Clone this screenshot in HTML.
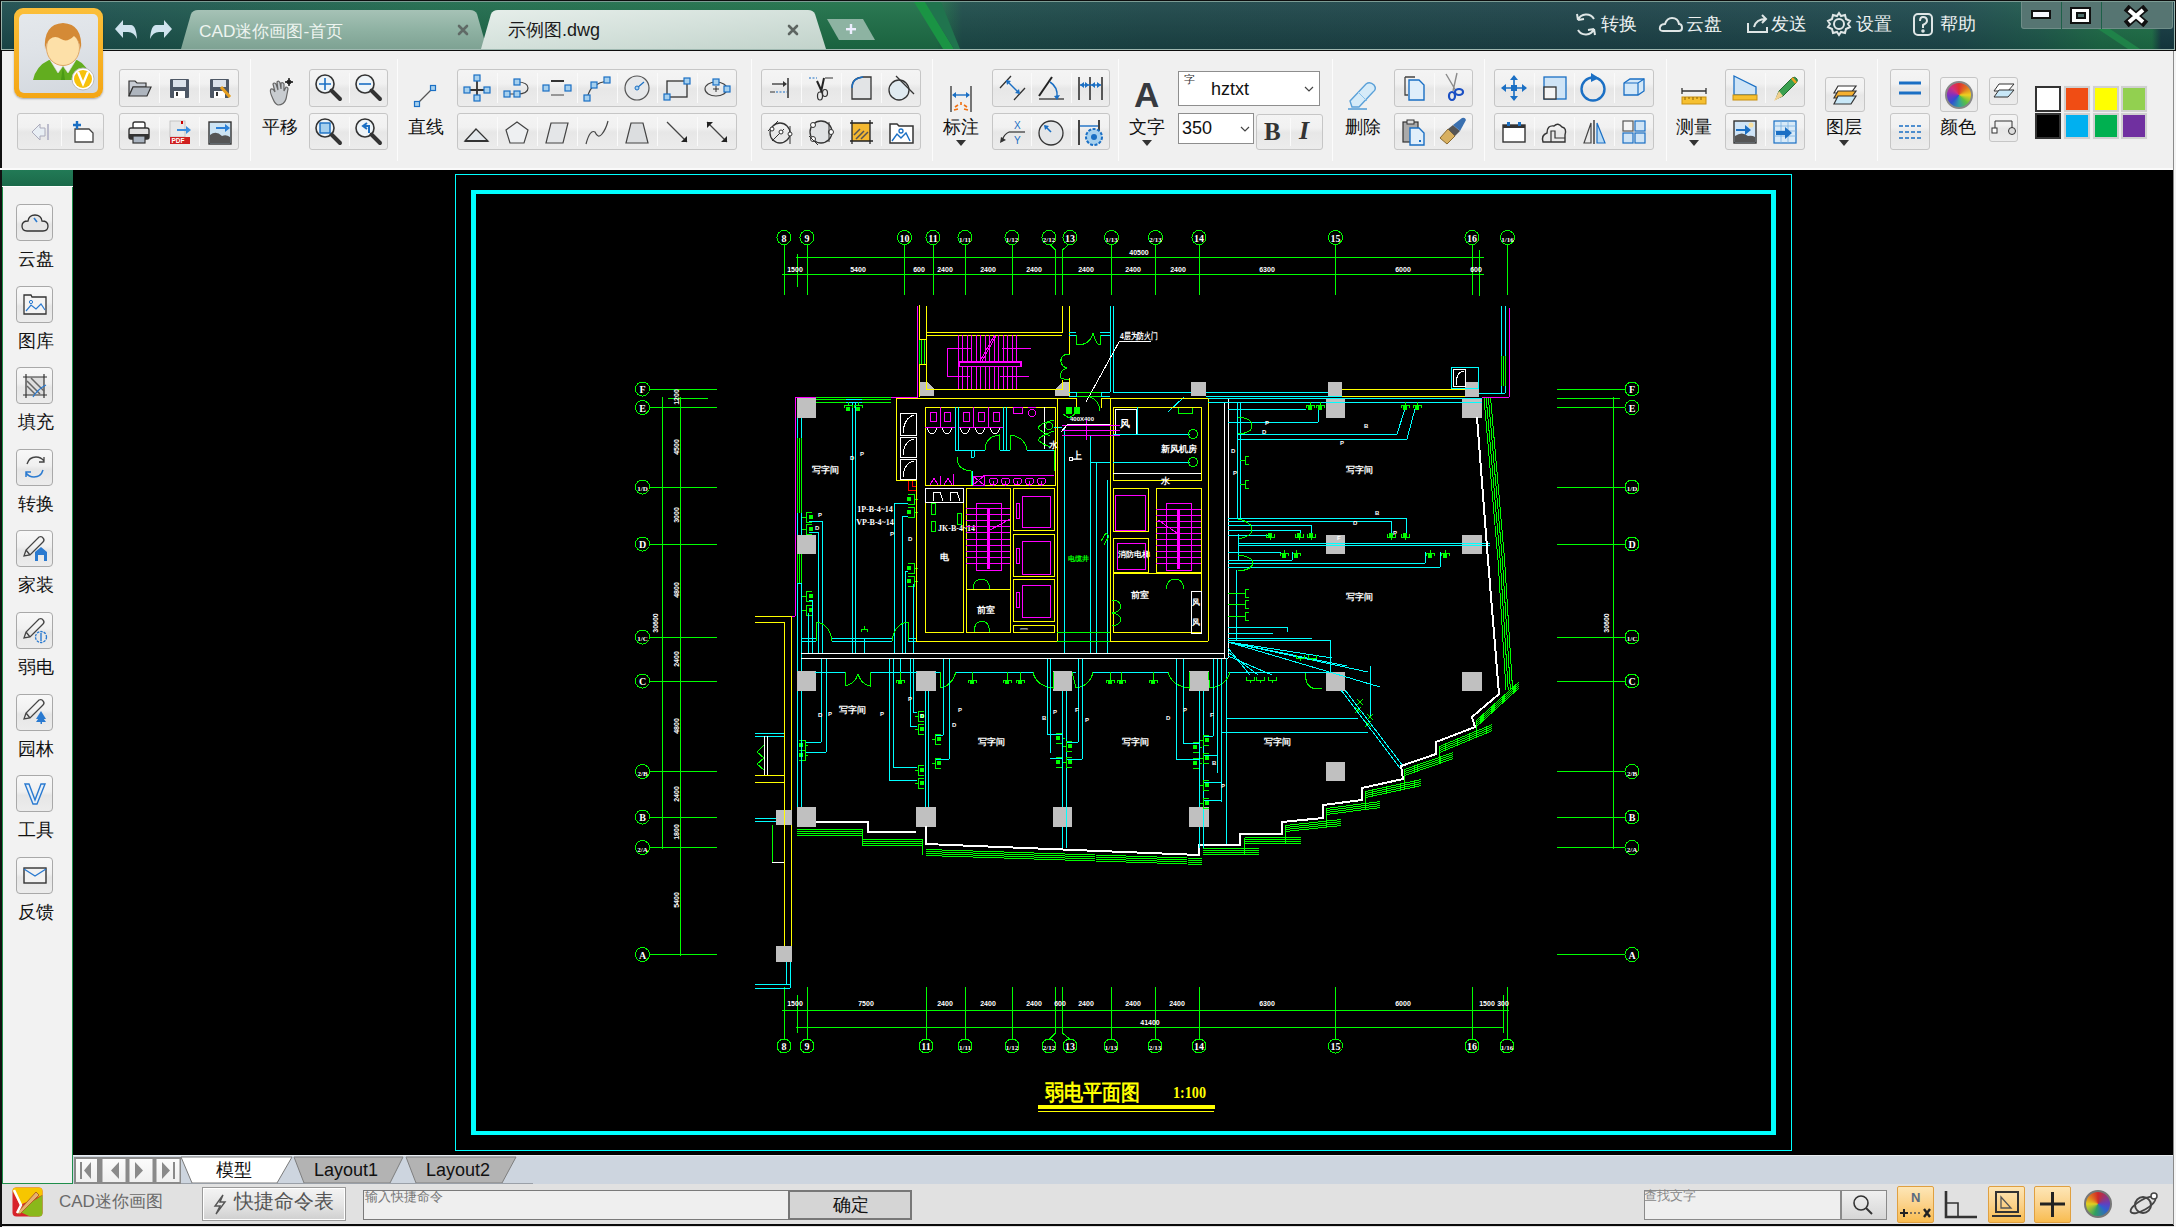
<!DOCTYPE html>
<html><head><meta charset="utf-8">
<style>
*{box-sizing:border-box;margin:0;padding:0}
html,body{width:2176px;height:1227px;overflow:hidden;background:#f0f0f0;font-family:"Liberation Sans",sans-serif;position:relative}
.a{position:absolute}
.t{position:absolute;white-space:nowrap;line-height:1}
#title{left:0;top:0;width:2176px;height:51px;background:#0d0d0d}
#titlein{left:1px;top:1px;width:2174px;height:49px;border:1px solid #9fb8b0;border-top-color:#7c9c94;
 background:linear-gradient(90deg,#1c4c4e 0px,#1d564e 170px,#1e6a4c 420px,#1e7048 830px,#1e7048 935px,#1d4c4a 960px,#1c4648 1150px,#1d4349 1600px,#1e4a4e 1950px,#1e5a4c 2040px,#1e6c48 2100px,#1e7048 2150px,#163c44 2159px)}
#toolbar{left:0;top:51px;width:2176px;height:118px;background:#f0f0f0;border-left:2px solid #111;border-right:2px solid #333}
#wline{left:0;top:168px;width:2176px;height:2px;background:#fafafa}
#sidebar{left:2px;top:170px;width:71px;height:1014px;background:#f2f2f2;border:1px solid #1e8e4a;border-top:none}
#sbhead{left:2px;top:170px;width:71px;height:17px;background:linear-gradient(#227a56,#1b6a4a);border-bottom:1px solid #fff}
#canvas{left:73px;top:170px;width:2103px;height:985px;background:#000;overflow:hidden}
#tabbar{left:73px;top:1155px;width:2103px;height:29px;background:#cdd5df;border-top:1px solid #e8ecf0}
#status{left:0;top:1184px;width:2176px;height:43px;background:#e1e1e1;border-left:2px solid #222}
#botline{left:0;top:1224px;width:2176px;height:2px;background:#0a0a0a}
#lborder{left:0;top:170px;width:2px;height:1057px;background:#111}
.grp{position:absolute;border:1px solid #c6c6c6;border-radius:3px;background:linear-gradient(180deg,#f4f4f4 0%,#f1f1f1 38%,#e7e7e7 52%,#ececec 100%)}
.dv{position:absolute;top:3px;bottom:3px;width:1px;background:#d2d2d2;border-right:1px solid #fafafa}
.sep{position:absolute;top:59px;width:1px;height:102px;background:#cfcfcf;border-right:1px solid #fcfcfc}
.lbl{position:absolute;white-space:nowrap;font-size:18px;line-height:20px;color:#111}
.ico{position:absolute;overflow:visible}
</style></head><body>
<div id="title" class="a"></div>
<div id="titlein" class="a"></div>
<div id="toolbar" class="a"></div>
<div id="wline" class="a"></div>
<div class="a" style="left:1px;top:2px;width:2173px;height:47px;background:linear-gradient(180deg,rgba(255,255,255,.06),rgba(0,0,0,.12))"></div>
<svg class="a" style="left:0;top:0" width="2176" height="51">
 <defs>
  <linearGradient id="tg1" x1="0" y1="0" x2="0" y2="1"><stop offset="0" stop-color="#a6c2b6"/><stop offset=".5" stop-color="#8fb2a3"/><stop offset="1" stop-color="#7ea293"/></linearGradient>
  <linearGradient id="tg2" x1="0" y1="0" x2="1" y2="1"><stop offset="0" stop-color="#e6eeea"/><stop offset=".5" stop-color="#d4e1db"/><stop offset="1" stop-color="#c2d3cb"/></linearGradient>
 </defs>
 <polygon points="914,2 925,2 954,49 943,49" fill="#1a9444"/>
 <polygon points="925,2 941,2 960,49 954,49" fill="#20744e"/>
 <polygon points="2098,29 2110,29 2140,49 2128,49" fill="#1f8a4a" opacity=".8"/>
 <path d="M181,49 L191,14 Q193,10 198,10 L470,10 Q475,10 477,14 L487,49 Z" fill="url(#tg1)"/>
 <path d="M481,49 L491,14 Q493,10 498,10 L808,10 Q813,10 815,14 L826,49 Z" fill="url(#tg2)"/>
 <polygon points="827,19 863,19 875,40 839,40" fill="#8db3a2"/>
 <rect x="846" y="28" width="10" height="2.4" fill="#eef"/>
 <rect x="849.8" y="24" width="2.4" height="10" fill="#eef"/>
 <g fill="#cfe3ee">
  <path d="M115,29 L123,20 L123,25 L131,25 Q136,25 137,39 Q134,32 128,32 L123,32 L123,38 Z"/>
  <path d="M172,29 L164,20 L164,25 L156,25 Q151,25 150,39 Q153,32 159,32 L164,32 L164,38 Z"/>
 </g>
 <g stroke="#606a66" stroke-width="2.6" stroke-linecap="round"><path d="M459,26 L467,34 M467,26 L459,34"/></g>
 <g stroke="#5d6561" stroke-width="2.6" stroke-linecap="round"><path d="M789,26 L797,34 M797,26 L789,34"/></g>
</svg>
<div class="a" style="left:199px;top:20px;font-size:17.3px;color:#eef4f0;white-space:nowrap;line-height:22px">CAD迷你画图-首页</div>
<div class="a" style="left:508px;top:19px;font-size:18px;color:#1a1a1a;white-space:nowrap;line-height:22px">示例图.dwg</div>
<!-- avatar -->
<div class="a" style="left:14px;top:8px;width:89px;height:90px;border-radius:9px;background:linear-gradient(#fbbf3a,#f4a614);box-shadow:0 1px 2px rgba(0,0,0,.3)"></div>
<div class="a" style="left:19px;top:14px;width:79px;height:79px;border-radius:5px;background:linear-gradient(170deg,#e4e8ec 0%,#dfe3e8 40%,#d3d8de 100%)"></div>
<svg class="a" style="left:14px;top:8px" width="90" height="92">
 <path d="M19,72 Q22,58 35,52 L63,52 Q74,57 77,72 Z" fill="#62ad1f"/>
 <path d="M36,52 L49,58 L44,65 Z M62,52 L49,58 L54,65 Z" fill="#f2f2f2" stroke="#d8d8d8" stroke-width=".6"/>
 <path d="M49,58 L47,72 L51,72 Z" fill="#4a9a14"/>
 <ellipse cx="49" cy="40" rx="16.5" ry="17.5" fill="#fde0a8" stroke="#e0a868" stroke-width="1"/>
 <path d="M31,42 Q29,16 49,15 Q69,16 67,42 Q65,31 60,28 Q53,35 47,31 Q41,27 36,31 Q32,34 31,42 Z" fill="#d48a36"/>
 <circle cx="69" cy="71" r="11" fill="#fff" stroke="#bbb" stroke-width="1"/>
 <circle cx="69" cy="71" r="9" fill="#f7c20c"/>
 <path d="M64,64 L69,76 L74,64" stroke="#fff" stroke-width="2.4" fill="none"/>
</svg>
<!-- right menu -->
<svg class="a" style="left:1570px;top:10px" width="420" height="30" fill="none" stroke="#dfe6e6" stroke-width="2">
 <path d="M24,9 A9,9 0 0 0 8,10 M8,10 L7,4 M8,10 L14,9 M8,20 A9,9 0 0 0 24,19 M24,19 L25,25 M24,19 L18,20" />
 <path d="M93,21 Q89,21 90,17 Q91,14 95,14 Q97,8 102,8 Q108,8 109,14 Q112,14 112,18 Q112,21 109,21 Z"/>
 <path d="M178,13 L178,22 L197,22 L197,17 M184,17 Q186,9 196,9 M192,5 L196,9 L192,13"/>
 <circle cx="269" cy="14" r="5"/><path d="M269,3 L271,6 L275,5 L276,9 L280,11 L278,14 L280,17 L276,19 L275,23 L271,22 L269,25 L267,22 L263,23 L262,19 L258,17 L260,14 L258,11 L262,9 L263,5 L267,6 Z"/>
 <rect x="344" y="4" width="18" height="21" rx="4"/><path d="M350,11 Q350,7 353,7 Q357,7 357,11 Q357,13 353,15 L353,18"/><circle cx="353" cy="21" r=".8" fill="#dfe6e6"/>
</svg>
<div class="a" style="left:1601px;top:13px;font-size:18px;color:#eef2f2;line-height:22px;white-space:nowrap">转换</div>
<div class="a" style="left:1686px;top:13px;font-size:18px;color:#eef2f2;line-height:22px;white-space:nowrap">云盘</div>
<div class="a" style="left:1771px;top:13px;font-size:18px;color:#eef2f2;line-height:22px;white-space:nowrap">发送</div>
<div class="a" style="left:1856px;top:13px;font-size:18px;color:#eef2f2;line-height:22px;white-space:nowrap">设置</div>
<div class="a" style="left:1940px;top:13px;font-size:18px;color:#eef2f2;line-height:22px;white-space:nowrap">帮助</div>
<!-- window buttons -->
<div class="a" style="left:2021px;top:2px;width:152px;height:27px;background:#567572;border:1px solid #6f8d88;border-top:none;border-radius:0 0 3px 3px"></div>
<div class="a" style="left:2061px;top:2px;width:1px;height:27px;background:#1d6048"></div>
<div class="a" style="left:2101px;top:2px;width:1px;height:27px;background:#1d6048"></div>
<div class="a" style="left:2031px;top:10px;width:20px;height:9px;background:#f8f8ff;border:2px solid #111"></div>
<div class="a" style="left:2070px;top:7px;width:21px;height:17px;background:#fff;border:2px solid #111"></div>
<div class="a" style="left:2076px;top:12px;width:10px;height:7px;background:#4f6e6a;border:2px solid #111"></div>
<svg class="a" style="left:2122px;top:5px" width="28" height="22"><path d="M7,5 L21,17 M21,5 L7,17" stroke="#111" stroke-width="7.5" stroke-linecap="square"/><path d="M7,5 L21,17 M21,5 L7,17" stroke="#fff" stroke-width="4"/></svg>


<div class="sep" style="left:250px"></div>
<div class="sep" style="left:397px"></div>
<div class="sep" style="left:751px"></div>
<div class="sep" style="left:932px"></div>
<div class="sep" style="left:1118px"></div>
<div class="sep" style="left:1332px"></div>
<div class="sep" style="left:1484px"></div>
<div class="sep" style="left:1666px"></div>
<div class="sep" style="left:1815px"></div>
<div class="sep" style="left:1877px"></div>
<div class="grp" style="left:17px;top:113px;width:87px;height:37px"><div class="dv" style="left:42.5px"></div></div>
<div class="grp" style="left:119px;top:69px;width:120px;height:38px"><div class="dv" style="left:39.0px"></div><div class="dv" style="left:79.0px"></div></div>
<div class="grp" style="left:119px;top:113px;width:120px;height:37px"><div class="dv" style="left:39.0px"></div><div class="dv" style="left:79.0px"></div></div>
<div class="grp" style="left:309px;top:69px;width:79px;height:38px"><div class="dv" style="left:38.5px"></div></div>
<div class="grp" style="left:309px;top:113px;width:79px;height:37px"><div class="dv" style="left:38.5px"></div></div>
<div class="grp" style="left:457px;top:69px;width:280px;height:38px"><div class="dv" style="left:39.0px"></div><div class="dv" style="left:79.0px"></div><div class="dv" style="left:119.0px"></div><div class="dv" style="left:159.0px"></div><div class="dv" style="left:199.0px"></div><div class="dv" style="left:239.0px"></div></div>
<div class="grp" style="left:457px;top:113px;width:280px;height:37px"><div class="dv" style="left:39.0px"></div><div class="dv" style="left:79.0px"></div><div class="dv" style="left:119.0px"></div><div class="dv" style="left:159.0px"></div><div class="dv" style="left:199.0px"></div><div class="dv" style="left:239.0px"></div></div>
<div class="grp" style="left:761px;top:69px;width:160px;height:38px"><div class="dv" style="left:39.0px"></div><div class="dv" style="left:79.0px"></div><div class="dv" style="left:119.0px"></div></div>
<div class="grp" style="left:761px;top:113px;width:160px;height:37px"><div class="dv" style="left:39.0px"></div><div class="dv" style="left:79.0px"></div><div class="dv" style="left:119.0px"></div></div>
<div class="grp" style="left:992px;top:69px;width:118px;height:38px"><div class="dv" style="left:38.3px"></div><div class="dv" style="left:77.7px"></div></div>
<div class="grp" style="left:992px;top:113px;width:118px;height:37px"><div class="dv" style="left:38.3px"></div><div class="dv" style="left:77.7px"></div></div>
<div class="grp" style="left:1256px;top:114px;width:67px;height:36px"><div class="dv" style="left:32.5px"></div></div>
<div class="grp" style="left:1394px;top:69px;width:79px;height:38px"><div class="dv" style="left:38.5px"></div></div>
<div class="grp" style="left:1394px;top:113px;width:79px;height:37px"><div class="dv" style="left:38.5px"></div></div>
<div class="grp" style="left:1494px;top:69px;width:160px;height:38px"><div class="dv" style="left:39.0px"></div><div class="dv" style="left:79.0px"></div><div class="dv" style="left:119.0px"></div></div>
<div class="grp" style="left:1494px;top:113px;width:160px;height:37px"><div class="dv" style="left:39.0px"></div><div class="dv" style="left:79.0px"></div><div class="dv" style="left:119.0px"></div></div>
<div class="grp" style="left:1725px;top:69px;width:80px;height:38px"><div class="dv" style="left:39.0px"></div></div>
<div class="grp" style="left:1725px;top:113px;width:80px;height:37px"><div class="dv" style="left:39.0px"></div></div>
<div class="grp" style="left:1825px;top:77px;width:40px;height:35px"></div>
<div class="grp" style="left:1890px;top:69px;width:40px;height:38px"></div>
<div class="grp" style="left:1890px;top:113px;width:40px;height:37px"></div>
<div class="grp" style="left:1940px;top:77px;width:38px;height:35px"></div>
<div class="grp" style="left:1989px;top:77px;width:29px;height:28px"></div>
<div class="grp" style="left:1989px;top:114px;width:29px;height:28px"></div>
<div class="lbl" style="left:262px;top:117px;width:36px;text-align:center">平移</div>
<div class="lbl" style="left:408px;top:117px;width:36px;text-align:center">直线</div>
<div class="lbl" style="left:943px;top:117px;width:36px;text-align:center">标注</div>
<div class="lbl" style="left:1129px;top:117px;width:36px;text-align:center">文字</div>
<div class="lbl" style="left:1345px;top:117px;width:36px;text-align:center">删除</div>
<div class="lbl" style="left:1676px;top:117px;width:36px;text-align:center">测量</div>
<div class="lbl" style="left:1826px;top:117px;width:36px;text-align:center">图层</div>
<div class="lbl" style="left:1940px;top:117px;width:36px;text-align:center">颜色</div>
<svg class="ico" style="left:956px;top:140px" width="10" height="6"><path d="M0,0 L10,0 L5,6Z" fill="#333"/></svg>
<svg class="ico" style="left:1142px;top:140px" width="10" height="6"><path d="M0,0 L10,0 L5,6Z" fill="#333"/></svg>
<svg class="ico" style="left:1689px;top:140px" width="10" height="6"><path d="M0,0 L10,0 L5,6Z" fill="#333"/></svg>
<svg class="ico" style="left:1839px;top:140px" width="10" height="6"><path d="M0,0 L10,0 L5,6Z" fill="#333"/></svg>
<svg class="ico" style="left:24.0px;top:116.5px" width="30" height="30" viewBox="0 0 30 30"><path d="M8,15 L16,7 L16,11 L21,11 L21,19 L16,19 L16,23Z" fill="#e8eef4" stroke="#aab" stroke-width="1"/><rect x="23" y="7" width="2" height="16" fill="#bbc"/></svg>
<svg class="ico" style="left:67.0px;top:116.5px" width="30" height="30" viewBox="0 0 30 30"><path d="M8,12 L22,12 L26,16 L26,25 L8,25Z" fill="#fff" stroke="#444" stroke-width="1.3"/><path d="M10,4 L10,12 M6,8 L14,8" stroke="#1a6fc4" stroke-width="2.4"/></svg>
<svg class="ico" style="left:124.0px;top:73.0px" width="30" height="30" viewBox="0 0 30 30"><path d="M5,8 L11,8 L13,10 L22,10 L22,14 L9,14 L5,23Z" fill="#c7ccd4" stroke="#333" stroke-width="1.2"/><path d="M5,23 L9,14 L27,14 L23,23Z" fill="#aeb5be" stroke="#333" stroke-width="1.2"/></svg>
<svg class="ico" style="left:164.0px;top:73.0px" width="30" height="30" viewBox="0 0 30 30"><rect x="6" y="6" width="19" height="19" rx="1" fill="#4e5866"/><rect x="9" y="7" width="13" height="7" fill="#dde3ea"/><rect x="10" y="18" width="11" height="7" fill="#fff"/><rect x="12" y="19" width="2" height="4" fill="#333"/></svg>
<svg class="ico" style="left:204.0px;top:73.0px" width="30" height="30" viewBox="0 0 30 30"><rect x="6" y="6" width="19" height="19" rx="1" fill="#4e5866"/><rect x="9" y="7" width="13" height="7" fill="#dde3ea"/><rect x="10" y="18" width="11" height="7" fill="#fff"/><rect x="12" y="19" width="2" height="4" fill="#333"/><path d="M17,14 L26,24" stroke="#e8a020" stroke-width="3"/></svg>
<svg class="ico" style="left:124.0px;top:116.5px" width="30" height="30" viewBox="0 0 30 30"><rect x="9" y="5" width="12" height="7" rx="2" fill="#fff" stroke="#333" stroke-width="1.4"/><rect x="5" y="11" width="20" height="11" rx="2" fill="#e0e0e0" stroke="#333" stroke-width="1.4"/><rect x="5" y="17" width="20" height="5" fill="#333"/><rect x="9" y="19" width="12" height="7" fill="#aab4c0" stroke="#333" stroke-width="1.2"/></svg>
<svg class="ico" style="left:164.0px;top:116.5px" width="30" height="30" viewBox="0 0 30 30"><rect x="6" y="4" width="15" height="16" fill="#e8e8e8" stroke="#bbb" stroke-width=".8"/><rect x="6" y="20" width="20" height="7" fill="#d02020"/><text x="7.5" y="26" font-size="6.5" fill="#fff" font-weight="bold" font-family="Liberation Sans">PDF</text><path d="M13,12 L22,12 L22,9 L27,13 L22,17 L22,14 L13,14Z" fill="#3a8ee0"/><rect x="17" y="4" width="2" height="3" fill="#c00"/></svg>
<svg class="ico" style="left:204.0px;top:116.5px" width="30" height="30" viewBox="0 0 30 30"><rect x="5" y="5" width="22" height="22" fill="#cde4f4" stroke="#333" stroke-width="1.4"/><path d="M6,26 L6,18 Q12,13 18,19 Q22,17 26,20 L26,26Z" fill="#555"/><path d="M12,10 L21,10 L21,7 L26,11 L21,15 L21,12 L12,12Z" fill="#2a80d8"/></svg>
<svg class="ico" style="left:264.0px;top:77.0px" width="32" height="32" viewBox="0 0 32 32"><path d="M9,22 Q5,14 7,12 Q9,11 11,15 L9,7 Q10,5 12,7 L14,13 L13,5 Q15,3 16,6 L17,12 L17,6 Q19,5 20,7 L20,14 L22,10 Q24,10 24,12 L22,22 Q20,28 14,28 Q11,27 9,22Z" fill="#c8ccd0" stroke="#666" stroke-width="1.2"/><path d="M25,1 L25,9 M21,5 L29,5" stroke="#111" stroke-width="1.4"/><circle cx="25" cy="5" r="2" fill="none" stroke="#111"/></svg>
<svg class="ico" style="left:313.0px;top:72.0px" width="32" height="32" viewBox="0 0 32 32"><circle cx="12" cy="12" r="9" fill="#eef4f8" stroke="#333" stroke-width="1.6"/><path d="M18.5,18.5 L27,27" stroke="#333" stroke-width="4" stroke-linecap="round"/><path d="M12,6 L12,18 M6,12 L18,12" stroke="#1a6fc4" stroke-width="1.6"/></svg>
<svg class="ico" style="left:353.0px;top:72.0px" width="32" height="32" viewBox="0 0 32 32"><circle cx="12" cy="12" r="9" fill="#eef4f8" stroke="#333" stroke-width="1.6"/><path d="M18.5,18.5 L27,27" stroke="#333" stroke-width="4" stroke-linecap="round"/><path d="M6,12 L18,12" stroke="#1a6fc4" stroke-width="1.6"/></svg>
<svg class="ico" style="left:313.0px;top:115.5px" width="32" height="32" viewBox="0 0 32 32"><circle cx="12" cy="12" r="9" fill="#eef4f8" stroke="#333" stroke-width="1.6"/><path d="M18.5,18.5 L27,27" stroke="#333" stroke-width="4" stroke-linecap="round"/><rect x="7" y="7" width="10" height="10" fill="#a6d0ee" stroke="#1a6fc4" stroke-width="1.4"/></svg>
<svg class="ico" style="left:353.0px;top:115.5px" width="32" height="32" viewBox="0 0 32 32"><circle cx="12" cy="12" r="9" fill="#eef4f8" stroke="#333" stroke-width="1.6"/><path d="M18.5,18.5 L27,27" stroke="#333" stroke-width="4" stroke-linecap="round"/><path d="M16,17 L16,10 L11,10 M14,7 L10,10 L14,13" stroke="#1a6fc4" stroke-width="2" fill="none"/></svg>
<svg class="ico" style="left:411.0px;top:80.0px" width="30" height="30" viewBox="0 0 30 30"><path d="M7,23 L21,9" stroke="#555" stroke-width="1.3"/><rect x="3.5" y="21.5" width="5" height="5" fill="#a6d0ee" stroke="#1a6fc4" stroke-width="1.2"/><rect x="19.5" y="5.5" width="5" height="5" fill="#a6d0ee" stroke="#1a6fc4" stroke-width="1.2"/></svg>
<svg class="ico" style="left:462.0px;top:73.0px" width="30" height="30" viewBox="0 0 30 30"><path d="M15,4 L15,26 M5,17 L25,17" stroke="#333" stroke-width="1.8"/><rect x="12.0" y="2.0" width="6" height="6" fill="#a6d0ee" stroke="#1a6fc4" stroke-width="1.2"/><rect x="12.0" y="22.0" width="6" height="6" fill="#a6d0ee" stroke="#1a6fc4" stroke-width="1.2"/><rect x="2.0" y="14.0" width="6" height="6" fill="#a6d0ee" stroke="#1a6fc4" stroke-width="1.2"/><rect x="22.0" y="14.0" width="6" height="6" fill="#a6d0ee" stroke="#1a6fc4" stroke-width="1.2"/></svg>
<svg class="ico" style="left:502.0px;top:73.0px" width="30" height="30" viewBox="0 0 30 30"><path d="M5,21 L15,21 M15,9 Q26,9 26,15 Q26,21 15,21" stroke="#444" stroke-width="1.2" fill="none"/><rect x="2.0" y="18.0" width="6" height="6" fill="#a6d0ee" stroke="#1a6fc4" stroke-width="1.2"/><rect x="12.0" y="18.0" width="6" height="6" fill="#a6d0ee" stroke="#1a6fc4" stroke-width="1.2"/><rect x="12.0" y="6.0" width="6" height="6" fill="#a6d0ee" stroke="#1a6fc4" stroke-width="1.2"/></svg>
<svg class="ico" style="left:542.0px;top:73.0px" width="30" height="30" viewBox="0 0 30 30"><path d="M9,8 L22,8" stroke="#333" stroke-width="2"/><path d="M9,22 L22,22" stroke="#444" stroke-width="1"/><rect x="1.0" y="12.0" width="6" height="6" fill="#a6d0ee" stroke="#1a6fc4" stroke-width="1.2"/><rect x="23.0" y="12.0" width="6" height="6" fill="#a6d0ee" stroke="#1a6fc4" stroke-width="1.2"/></svg>
<svg class="ico" style="left:582.0px;top:73.0px" width="30" height="30" viewBox="0 0 30 30"><path d="M5,25 Q8,15 12,13 Q18,9 25,8" stroke="#444" stroke-width="1.2" fill="none"/><rect x="2.0" y="22.0" width="6" height="6" fill="#a6d0ee" stroke="#1a6fc4" stroke-width="1.2"/><rect x="9.0" y="9.0" width="6" height="6" fill="#a6d0ee" stroke="#1a6fc4" stroke-width="1.2"/><rect x="22.0" y="4.0" width="6" height="6" fill="#a6d0ee" stroke="#1a6fc4" stroke-width="1.2"/></svg>
<svg class="ico" style="left:622.0px;top:73.0px" width="30" height="30" viewBox="0 0 30 30"><circle cx="15" cy="15" r="12" fill="#e6e8ea" stroke="#555" stroke-width="1.2"/><path d="M15,15 L22,9" stroke="#1a6fc4" stroke-width="1.2"/><circle cx="15" cy="15" r="2" fill="#a6d0ee" stroke="#1a6fc4"/></svg>
<svg class="ico" style="left:662.0px;top:73.0px" width="30" height="30" viewBox="0 0 30 30"><rect x="5" y="8" width="20" height="16" fill="#e8eaec" stroke="#333" stroke-width="1.3"/><rect x="2.0" y="21.0" width="6" height="6" fill="#a6d0ee" stroke="#1a6fc4" stroke-width="1.2"/><rect x="22.0" y="5.0" width="6" height="6" fill="#a6d0ee" stroke="#1a6fc4" stroke-width="1.2"/></svg>
<svg class="ico" style="left:702.0px;top:73.0px" width="30" height="30" viewBox="0 0 30 30"><ellipse cx="14" cy="16" rx="11" ry="7" fill="none" stroke="#444" stroke-width="1.2"/><path d="M14,13 L14,19 M11,16 L17,16" stroke="#333"/><rect x="11.0" y="6.0" width="6" height="6" fill="#a6d0ee" stroke="#1a6fc4" stroke-width="1.2"/><rect x="22.0" y="13.0" width="6" height="6" fill="#a6d0ee" stroke="#1a6fc4" stroke-width="1.2"/></svg>
<svg class="ico" style="left:462.0px;top:116.5px" width="30" height="30" viewBox="0 0 30 30"><path d="M3,24 L14,12 L26,24Z" fill="#e4e8ec" stroke="#333" stroke-width="1.3"/><path d="M3,24 L26,24" stroke="#333" stroke-width="2"/></svg>
<svg class="ico" style="left:502.0px;top:116.5px" width="30" height="30" viewBox="0 0 30 30"><path d="M15,5 L26,13 L22,26 L8,26 L4,13Z" fill="#eef0f2" stroke="#444" stroke-width="1.2"/></svg>
<svg class="ico" style="left:542.0px;top:116.5px" width="30" height="30" viewBox="0 0 30 30"><path d="M9,6 L26,6 L21,26 L4,26Z" fill="#e4e6e8" stroke="#444" stroke-width="1.2"/></svg>
<svg class="ico" style="left:582.0px;top:116.5px" width="30" height="30" viewBox="0 0 30 30"><path d="M4,27 Q8,12 13,15 Q16,22 20,17 Q24,12 26,4" stroke="#444" stroke-width="1.2" fill="none"/></svg>
<svg class="ico" style="left:622.0px;top:116.5px" width="30" height="30" viewBox="0 0 30 30"><path d="M9,6 L21,6 L26,26 L4,26Z" fill="#dcdee0" stroke="#444" stroke-width="1.2"/></svg>
<svg class="ico" style="left:662.0px;top:116.5px" width="30" height="30" viewBox="0 0 30 30"><path d="M5,5 L25,25" stroke="#444" stroke-width="1.3"/><path d="M25,25 L25,19 L19,25Z" fill="#222"/></svg>
<svg class="ico" style="left:702.0px;top:116.5px" width="30" height="30" viewBox="0 0 30 30"><path d="M5,5 L25,25" stroke="#444" stroke-width="1.3"/><path d="M25,25 L25,19 L19,25Z M5,5 L5,11 L11,5Z" fill="#222"/></svg>
<svg class="ico" style="left:766.0px;top:73.0px" width="30" height="30" viewBox="0 0 30 30"><path d="M22,5 L22,25" stroke="#333" stroke-width="1.5"/><path d="M6,11 L17,11" stroke="#333" stroke-width="1.3"/><path d="M17,8 L21,11 L17,14Z" fill="#333"/><path d="M4,19 L9,19" stroke="#333"/><path d="M10,19 L21,19" stroke="#1a6fc4" stroke-dasharray="2,1.5"/></svg>
<svg class="ico" style="left:806.0px;top:73.0px" width="30" height="30" viewBox="0 0 30 30"><path d="M3,5 L11,5" stroke="#1a6fc4" stroke-dasharray="2,1.5"/><path d="M19,5 L27,5" stroke="#333"/><path d="M11,8 L16,19 M18,5 L15,19" stroke="#222" stroke-width="2"/><ellipse cx="14" cy="23" rx="2.5" ry="4" fill="none" stroke="#333" stroke-width="1.2"/><ellipse cx="19" cy="20" rx="2.5" ry="3.5" fill="none" stroke="#333" stroke-width="1.2"/></svg>
<svg class="ico" style="left:846.0px;top:73.0px" width="30" height="30" viewBox="0 0 30 30"><path d="M6,26 L6,14 Q6,5 17,4 L25,4 L25,26Z" fill="#e2e4e6" stroke="#333" stroke-width="1.3"/><path d="M6,15 Q6,5 17,4" stroke="#1a6fc4" stroke-width="1.4" fill="none"/></svg>
<svg class="ico" style="left:886.0px;top:73.0px" width="30" height="30" viewBox="0 0 30 30"><circle cx="13" cy="17" r="10" fill="#e0eaf0" stroke="#333" stroke-width="1.3"/><path d="M10,3 L28,21" stroke="#333" stroke-width="1.3"/></svg>
<svg class="ico" style="left:766.0px;top:116.5px" width="30" height="30" viewBox="0 0 30 30"><circle cx="14" cy="16" r="10" fill="none" stroke="#333" stroke-width="1.3"/><path d="M2,14 L12,4 M24,9 L24,27 M6,24 L18,12" stroke="#333"/><circle cx="6" cy="12" r="2" fill="#fff" stroke="#333"/><circle cx="24" cy="17" r="2" fill="#fff" stroke="#333"/><circle cx="15" cy="15" r="2" fill="#fff" stroke="#333"/></svg>
<svg class="ico" style="left:806.0px;top:116.5px" width="30" height="30" viewBox="0 0 30 30"><circle cx="15" cy="15" r="11" fill="#e0e2e4" stroke="#333" stroke-width="1.3"/><circle cx="7" cy="8" r="2.5" fill="#fff" stroke="#333"/><circle cx="7" cy="22" r="2.5" fill="#fff" stroke="#333"/><circle cx="25" cy="15" r="2.5" fill="#fff" stroke="#333"/><path d="M23,5 L23,25 M3,19 L12,28" stroke="#333"/></svg>
<svg class="ico" style="left:846.0px;top:116.5px" width="30" height="30" viewBox="0 0 30 30"><rect x="6" y="6" width="18" height="18" fill="#f4b830"/><path d="M4,6 L27,6 M4,24 L27,24 M6,3 L6,27 M24,3 L24,27" stroke="#222" stroke-width="1.3"/><path d="M8,18 L14,12 M10,22 L18,14 M15,22 L22,15" stroke="#555" stroke-width="1.5"/></svg>
<svg class="ico" style="left:886.0px;top:116.5px" width="30" height="30" viewBox="0 0 30 30"><path d="M4,7 L11,7 L13,9 L27,9 L27,26 L4,26Z" fill="#fff" stroke="#333" stroke-width="1.5"/><circle cx="15" cy="14" r="2" fill="none" stroke="#1a6fc4" stroke-width="1.3"/><path d="M6,24 L11,17 L15,21 L20,16 L24,24" fill="none" stroke="#1a6fc4" stroke-width="1.4"/></svg>
<svg class="ico" style="left:946.0px;top:84.0px" width="30" height="30" viewBox="0 0 30 30"><path d="M5,2 L5,28 M25,2 L25,28" stroke="#333" stroke-width="1.3"/><path d="M7,11 L23,11" stroke="#1a6fc4" stroke-width="1.4"/><path d="M6,11 L10,8 L10,14Z M24,11 L20,8 L20,14Z" fill="#1a6fc4"/><path d="M15,18 L15,21 M9,23 L12,21 M21,23 L18,21 M8,26 L12,25 M22,26 L18,25" stroke="#f07010" stroke-width="1.6"/></svg>
<svg class="ico" style="left:996.7px;top:73.0px" width="30" height="30" viewBox="0 0 30 30"><path d="M3,15 L14,3 M17,27 L28,15" stroke="#333" stroke-width="1.3"/><path d="M10,8 L22,20" stroke="#1a6fc4" stroke-width="1.5"/><path d="M9,7 L14,8 L10,12Z M23,21 L18,20 L22,16Z" fill="#1a6fc4"/></svg>
<svg class="ico" style="left:1036.0px;top:73.0px" width="30" height="30" viewBox="0 0 30 30"><path d="M3,23 L16,4" stroke="#222" stroke-width="2"/><path d="M3,26 L28,26" stroke="#333" stroke-width="1.3"/><path d="M14,9 Q22,14 21,24" stroke="#1a6fc4" stroke-width="1.5" fill="none"/><path d="M18,23 L21,27 L24,22Z" fill="#1a6fc4"/></svg>
<svg class="ico" style="left:1075.3px;top:73.0px" width="30" height="30" viewBox="0 0 30 30"><path d="M4,4 L4,27 M15,4 L15,27 M27,4 L27,27" stroke="#333" stroke-width="1.6"/><path d="M5,12 L26,12" stroke="#1a6fc4" stroke-width="1.4"/><path d="M5,12 L9,9 L9,15Z M14,12 L10,9 L10,15Z M16,12 L20,9 L20,15Z M26,12 L22,9 L22,15Z" fill="#1a6fc4"/></svg>
<svg class="ico" style="left:996.7px;top:116.5px" width="30" height="30" viewBox="0 0 30 30"><text x="17" y="12" font-size="10" fill="#1a6fc4" font-family="Liberation Sans">X</text><text x="17" y="27" font-size="10" fill="#1a6fc4" font-family="Liberation Sans">Y</text><path d="M12,15 L28,15" stroke="#333" stroke-width="1.2"/><path d="M12,15 Q7,17 5,24" stroke="#333" fill="none" stroke-width="1.3"/><path d="M3,26 L4,20 L9,23Z" fill="#333"/></svg>
<svg class="ico" style="left:1036.0px;top:116.5px" width="30" height="30" viewBox="0 0 30 30"><circle cx="15" cy="16" r="12" fill="#e4e6e8" stroke="#333" stroke-width="1.3"/><path d="M9,9 L15,15" stroke="#1a6fc4" stroke-width="1.6"/><path d="M8,8 L13,9 L9,13Z" fill="#1a6fc4"/></svg>
<svg class="ico" style="left:1075.3px;top:116.5px" width="30" height="30" viewBox="0 0 30 30"><path d="M4,3 L4,28 M24,3 L24,14" stroke="#444" stroke-width="2"/><path d="M5,9 L23,9" stroke="#1a6fc4" stroke-width="1.4"/><circle cx="19" cy="20" r="8" fill="#a6d0ee" stroke="#1a6fc4" stroke-width="2" stroke-dasharray="3,1.5"/><circle cx="19" cy="20" r="3" fill="#1a6fc4"/></svg>
<div class="t" style="left:1134px;top:77px;font-size:35px;font-weight:bold;color:#373a40;font-family:'Liberation Sans',sans-serif">A</div>
<div class="a" style="left:1178px;top:71px;width:142px;height:35px;background:#fff;border:1px solid #8e8e8e"></div>
<div class="t" style="left:1211px;top:80px;font-size:18px;color:#111">hztxt</div>
<div class="t" style="left:1184px;top:74px;font-size:11px;color:#333">字</div>
<svg class="ico" style="left:1304px;top:86px" width="10" height="6"><path d="M1,1 L5,5 L9,1" stroke="#444" fill="none" stroke-width="1.2"/></svg>
<div class="a" style="left:1178px;top:113px;width:76px;height:31px;background:#fff;border:1px solid #8e8e8e"></div>
<div class="t" style="left:1182px;top:119px;font-size:18px;color:#111">350</div>
<svg class="ico" style="left:1240px;top:126px" width="10" height="6"><path d="M1,1 L5,5 L9,1" stroke="#444" fill="none" stroke-width="1.2"/></svg>
<div class="t" style="left:1264px;top:119px;font-size:25px;font-weight:bold;color:#333;font-family:'Liberation Serif',serif">B</div>
<div class="t" style="left:1299px;top:118px;font-size:26px;font-weight:bold;font-style:italic;color:#333;font-family:'Liberation Serif',serif">I</div>
<svg class="ico" style="left:1347.0px;top:79.0px" width="32" height="32" viewBox="0 0 32 32"><path d="M3,22 L19,5 Q23,2 27,6 Q30,10 26,13 L12,28 L5,28Z" fill="#d6ebf8" stroke="#5aa0d8" stroke-width="1.4"/><path d="M11,13 L20,22" stroke="#8cc4ec" stroke-width="1"/><path d="M1,30 L20,30" stroke="#5aa0d8" stroke-width="1.6"/></svg>
<svg class="ico" style="left:1399.0px;top:73.0px" width="30" height="30" viewBox="0 0 30 30"><path d="M6,4 L16,4 M6,4 L6,22 L9,22" stroke="#444" stroke-width="1.3" fill="none"/><path d="M10,7 L20,7 L25,12 L25,27 L10,27Z" fill="#e0eefa" stroke="#1a6fc4" stroke-width="1.4"/></svg>
<svg class="ico" style="left:1437.5px;top:72.0px" width="32" height="32" viewBox="0 0 32 32"><path d="M8,2 L18,19 M19,1 L15,19" stroke="#8a8a8a" stroke-width="1.4"/><ellipse cx="14" cy="24" rx="3" ry="4" fill="none" stroke="#1a4fc4" stroke-width="2.2"/><ellipse cx="21" cy="20" rx="4" ry="3" fill="none" stroke="#1a4fc4" stroke-width="2.2"/></svg>
<svg class="ico" style="left:1399.0px;top:116.5px" width="30" height="30" viewBox="0 0 30 30"><rect x="4" y="5" width="15" height="20" fill="#aaa" stroke="#333" stroke-width="1.2"/><rect x="8" y="3" width="7" height="4" fill="#ddd" stroke="#333"/><path d="M11,11 L20,11 L25,16 L25,28 L11,28Z" fill="#e0eefa" stroke="#1a6fc4" stroke-width="1.4"/><rect x="20" y="23" width="2" height="2" fill="#1a6fc4"/></svg>
<svg class="ico" style="left:1437.5px;top:115.5px" width="32" height="32" viewBox="0 0 32 32"><path d="M2,22 L10,13 L17,20 L9,28 Z" fill="#d8b060" stroke="#8a6a30" stroke-width="1"/><path d="M10,13 L15,9 L22,15 L17,20 Z" fill="#555"/><path d="M15,9 L24,2 Q27,1 28,4 L22,15 Z" fill="#3a70b0"/></svg>
<svg class="ico" style="left:1499.0px;top:73.0px" width="30" height="30" viewBox="0 0 30 30"><path d="M15,3 L15,27 M3,15 L27,15" stroke="#1a6fc4" stroke-width="1.6"/><path d="M15,2 L11,7 L19,7Z M15,28 L11,23 L19,23Z M2,15 L7,11 L7,19Z M28,15 L23,11 L23,19Z" fill="#1a6fc4"/><rect x="12" y="12" width="6" height="6" fill="#1a6fc4"/></svg>
<svg class="ico" style="left:1539.0px;top:73.0px" width="30" height="30" viewBox="0 0 30 30"><rect x="5" y="4" width="22" height="22" fill="#cfe4f6" stroke="#1a6fc4" stroke-width="1.3"/><rect x="5" y="14" width="12" height="12" fill="#f4f4f4" stroke="#333" stroke-width="1.3"/></svg>
<svg class="ico" style="left:1578.0px;top:72.0px" width="32" height="32" viewBox="0 0 32 32"><circle cx="15" cy="17" r="11.5" fill="none" stroke="#1a6fc4" stroke-width="2.4"/><path d="M13,1 L21,6 L13,10Z" fill="#1a6fc4"/></svg>
<svg class="ico" style="left:1619.0px;top:73.0px" width="30" height="30" viewBox="0 0 30 30"><path d="M5,10 L11,6 L25,6 L25,18 L19,22 L5,22Z" fill="#d4e8f8" stroke="#1a6fc4" stroke-width="1.3"/><path d="M5,10 L19,10 L25,6 M19,10 L19,22" stroke="#1a6fc4" stroke-width="1.2" fill="none"/></svg>
<svg class="ico" style="left:1499.0px;top:116.5px" width="30" height="30" viewBox="0 0 30 30"><rect x="4" y="8" width="22" height="17" fill="#fff" stroke="#333" stroke-width="1.4"/><rect x="4" y="8" width="22" height="3" fill="#333"/><rect x="8" y="5" width="3" height="4" fill="#1a6fc4"/><rect x="19" y="5" width="3" height="4" fill="#1a6fc4"/></svg>
<svg class="ico" style="left:1539.0px;top:116.5px" width="30" height="30" viewBox="0 0 30 30"><path d="M4,25 Q2,18 8,16 Q8,8 15,9 Q19,5 23,10 Q28,11 26,18 L26,25Z" fill="none" stroke="#333" stroke-width="1.4"/><path d="M12,25 L12,14 L16,14 L16,21 L26,21" stroke="#333" stroke-width="1.2" fill="none"/></svg>
<svg class="ico" style="left:1579.0px;top:116.5px" width="30" height="30" viewBox="0 0 30 30"><path d="M15,3 L15,27" stroke="#333" stroke-width="1.4"/><path d="M12,6 L5,26 L12,26Z" fill="none" stroke="#444" stroke-width="1.2"/><path d="M18,6 L26,26 L18,26Z" fill="#b8daf4" stroke="#1a6fc4" stroke-width="1.2"/></svg>
<svg class="ico" style="left:1619.0px;top:116.5px" width="30" height="30" viewBox="0 0 30 30"><rect x="4" y="4" width="10" height="10" fill="#f4f4f4" stroke="#555" stroke-width="1.2"/><rect x="16" y="4" width="10" height="10" fill="#cfe4f6" stroke="#1a6fc4" stroke-width="1.2"/><rect x="4" y="16" width="10" height="10" fill="#cfe4f6" stroke="#1a6fc4" stroke-width="1.2"/><rect x="16" y="16" width="10" height="10" fill="#cfe4f6" stroke="#1a6fc4" stroke-width="1.2"/></svg>
<svg class="ico" style="left:1679.0px;top:81.0px" width="30" height="30" viewBox="0 0 30 30"><rect x="3" y="16" width="24" height="7" fill="#f6c030" stroke="#c89010"/><path d="M6,16 L6,19 M10,16 L10,18 M14,16 L14,19 M18,16 L18,18 M22,16 L22,19" stroke="#8a6000"/><path d="M3,10 L27,10 M3,7 L3,13 M27,7 L27,13" stroke="#333" stroke-width="1.3"/></svg>
<svg class="ico" style="left:1730.0px;top:73.0px" width="30" height="30" viewBox="0 0 30 30"><path d="M4,3 L26,14 L26,22 L4,22Z" fill="#cfe4f6" stroke="#1a6fc4" stroke-width="1.3"/><rect x="3" y="22" width="24" height="5" fill="#f6c030" stroke="#c89010"/></svg>
<svg class="ico" style="left:1770.0px;top:73.0px" width="30" height="30" viewBox="0 0 30 30"><path d="M6,26 L9,18 L22,5 Q25,3 27,6 Q28,8 26,10 L13,23Z" fill="#3aa050" stroke="#236a30" stroke-width="1"/><path d="M4,28 L9,18 L13,23Z" fill="#f0d090"/><path d="M22,5 L26,10" stroke="#f0a020" stroke-width="2.5"/></svg>
<svg class="ico" style="left:1730.0px;top:116.5px" width="30" height="30" viewBox="0 0 30 30"><rect x="4" y="4" width="22" height="22" fill="#cfe4f6" stroke="#333" stroke-width="1.4"/><path d="M5,25 L5,19 Q12,14 18,19 Q22,18 25,20 L25,25Z" fill="#555"/><path d="M6,12 L15,12 L15,8 L21,13 L15,18 L15,14 L6,14Z" fill="#1a6fc4"/><circle cx="21" cy="8" r="2.5" fill="#f8e0a0"/></svg>
<svg class="ico" style="left:1770.0px;top:116.5px" width="30" height="30" viewBox="0 0 30 30"><rect x="4" y="4" width="22" height="22" fill="#d8eaf8" stroke="#1a6fc4" stroke-width="1.2"/><path d="M4,9 L26,9 M4,14 L26,14 M4,19 L26,19 M11,4 L11,26 M18,4 L18,26" stroke="#7ab0e0" stroke-width=".8"/><path d="M6,14 L15,14 L15,10 L22,16 L15,22 L15,18 L6,18Z" fill="#1a6fc4"/></svg>
<svg class="ico" style="left:1830.0px;top:79.5px" width="30" height="30" viewBox="0 0 30 30"><path d="M8,6 L26,6 L21,13 L4,13Z" fill="#fff" stroke="#333" stroke-width="1.2"/><path d="M8,11 L26,11 L21,18 L4,18Z" fill="#f4b030" stroke="#333" stroke-width="1.2"/><path d="M8,16 L26,16 L21,24 L4,24Z" fill="#c8e8f8" stroke="#333" stroke-width="1.2"/></svg>
<svg class="ico" style="left:1895.0px;top:73.0px" width="30" height="30" viewBox="0 0 30 30"><path d="M4,10 L26,10 M4,20 L26,20" stroke="#1a6fc4" stroke-width="3"/></svg>
<svg class="ico" style="left:1895.0px;top:116.5px" width="30" height="30" viewBox="0 0 30 30"><path d="M4,9 L26,9 M4,15 L26,15 M4,21 L26,21" stroke="#1a6fc4" stroke-width="1.6" stroke-dasharray="4,2"/></svg>
<div class="a" style="left:1945px;top:81px;width:28px;height:28px;border-radius:50%;background:conic-gradient(#e03030,#e07020,#f0d020,#60c040,#30a0a0,#3050d0,#8030c0,#d03080,#e03030);border:2px solid #888"></div>
<svg class="ico" style="left:1989.5px;top:79.0px" width="28" height="24" viewBox="0 0 28 24"><path d="M9,5 L24,5 L18,12 L4,12Z" fill="#fff" stroke="#333"/><path d="M9,11 L24,11 L18,18 L4,18Z" fill="#c8e8f8" stroke="#333"/></svg>
<svg class="ico" style="left:1989.5px;top:116.0px" width="28" height="24" viewBox="0 0 28 24"><rect x="2" y="12" width="5" height="5" fill="#fff" stroke="#333"/><path d="M5,12 L5,5 L22,5 L22,12" stroke="#333" fill="none"/><circle cx="22" cy="15" r="3.5" fill="#ddd" stroke="#333"/></svg>
<div class="a" style="left:2035px;top:86px;width:26px;height:26px;background:#ffffff;border:2px solid #333;outline:1px solid #eee"></div>
<div class="a" style="left:2064px;top:86px;width:26px;height:26px;background:#f04d14;border:2px solid #d0d0d0;outline:1px solid #eee"></div>
<div class="a" style="left:2093px;top:86px;width:26px;height:26px;background:#ffff00;border:2px solid #d0d0d0;outline:1px solid #eee"></div>
<div class="a" style="left:2121px;top:86px;width:26px;height:26px;background:#92d050;border:2px solid #d0d0d0;outline:1px solid #eee"></div>
<div class="a" style="left:2035px;top:113px;width:26px;height:26px;background:#000000;border:2px solid #333;outline:1px solid #eee"></div>
<div class="a" style="left:2064px;top:113px;width:26px;height:26px;background:#00b0f0;border:2px solid #d0d0d0;outline:1px solid #eee"></div>
<div class="a" style="left:2093px;top:113px;width:26px;height:26px;background:#00b050;border:2px solid #d0d0d0;outline:1px solid #eee"></div>
<div class="a" style="left:2121px;top:113px;width:26px;height:26px;background:#7030a0;border:2px solid #d0d0d0;outline:1px solid #eee"></div>
<div id="canvas" class="a"><svg class="a" style="left:-73px;top:-170px" width="2176" height="1227" shape-rendering="crispEdges" font-family="Liberation Sans"><rect x="455.5" y="174.5" width="1336" height="976" fill="none" stroke="#00ffff" stroke-width="1"/>
<rect x="473.5" y="192" width="1300" height="941" fill="none" stroke="#00ffff" stroke-width="4.5"/>
<circle cx="784" cy="237.5" r="7" fill="none" stroke="#00ff00" stroke-width="1"/>
<line x1="784.5" y1="244" x2="784.5" y2="295" stroke="#00ff00" stroke-width="1"/>
<text x="784" y="241.5" fill="#ffffff" font-size="10" text-anchor="middle" font-weight="bold" font-family="Liberation Serif" transform-origin="784 241" >8</text>
<circle cx="807" cy="237.5" r="7" fill="none" stroke="#00ff00" stroke-width="1"/>
<line x1="807.5" y1="244" x2="807.5" y2="295" stroke="#00ff00" stroke-width="1"/>
<text x="807" y="241.5" fill="#ffffff" font-size="10" text-anchor="middle" font-weight="bold" font-family="Liberation Serif" transform-origin="807 241" >9</text>
<circle cx="904.5" cy="237.5" r="7" fill="none" stroke="#00ff00" stroke-width="1"/>
<line x1="904.5" y1="244" x2="904.5" y2="295" stroke="#00ff00" stroke-width="1"/>
<text x="904.5" y="241.5" fill="#ffffff" font-size="10" text-anchor="middle" font-weight="bold" font-family="Liberation Serif" transform-origin="904.5 241" >10</text>
<circle cx="933" cy="237.5" r="7" fill="none" stroke="#00ff00" stroke-width="1"/>
<line x1="933.5" y1="244" x2="933.5" y2="295" stroke="#00ff00" stroke-width="1"/>
<text x="933" y="241.5" fill="#ffffff" font-size="10" text-anchor="middle" font-weight="bold" font-family="Liberation Serif" transform-origin="933 241" >11</text>
<circle cx="965" cy="237.5" r="7" fill="none" stroke="#00ff00" stroke-width="1"/>
<line x1="965.5" y1="244" x2="965.5" y2="295" stroke="#00ff00" stroke-width="1"/>
<text x="965" y="241.5" fill="#ffffff" font-size="7" text-anchor="middle" font-weight="bold" font-family="Liberation Serif" transform-origin="965 241" >1/11</text>
<circle cx="1012" cy="237.5" r="7" fill="none" stroke="#00ff00" stroke-width="1"/>
<line x1="1012.5" y1="244" x2="1012.5" y2="295" stroke="#00ff00" stroke-width="1"/>
<text x="1012" y="241.5" fill="#ffffff" font-size="7" text-anchor="middle" font-weight="bold" font-family="Liberation Serif" transform-origin="1012 241" >1/12</text>
<circle cx="1049" cy="237.5" r="7" fill="none" stroke="#00ff00" stroke-width="1"/>
<line x1="1049.5" y1="244" x2="1055.5" y2="250" stroke="#00ff00" stroke-width="1"/>
<line x1="1055.5" y1="250" x2="1055.5" y2="295" stroke="#00ff00" stroke-width="1"/>
<text x="1049" y="241.5" fill="#ffffff" font-size="7" text-anchor="middle" font-weight="bold" font-family="Liberation Serif" transform-origin="1049 241" >2/12</text>
<circle cx="1070" cy="237.5" r="7" fill="none" stroke="#00ff00" stroke-width="1"/>
<line x1="1069.5" y1="244" x2="1062.5" y2="250" stroke="#00ff00" stroke-width="1"/>
<line x1="1062.5" y1="250" x2="1062.5" y2="295" stroke="#00ff00" stroke-width="1"/>
<text x="1070" y="241.5" fill="#ffffff" font-size="10" text-anchor="middle" font-weight="bold" font-family="Liberation Serif" transform-origin="1070 241" >13</text>
<circle cx="1111.5" cy="237.5" r="7" fill="none" stroke="#00ff00" stroke-width="1"/>
<line x1="1111.5" y1="244" x2="1111.5" y2="295" stroke="#00ff00" stroke-width="1"/>
<text x="1111.5" y="241.5" fill="#ffffff" font-size="7" text-anchor="middle" font-weight="bold" font-family="Liberation Serif" transform-origin="1111.5 241" >1/13</text>
<circle cx="1155.5" cy="237.5" r="7" fill="none" stroke="#00ff00" stroke-width="1"/>
<line x1="1155.5" y1="244" x2="1155.5" y2="295" stroke="#00ff00" stroke-width="1"/>
<text x="1155.5" y="241.5" fill="#ffffff" font-size="7" text-anchor="middle" font-weight="bold" font-family="Liberation Serif" transform-origin="1155.5 241" >2/13</text>
<circle cx="1199" cy="237.5" r="7" fill="none" stroke="#00ff00" stroke-width="1"/>
<line x1="1199.5" y1="244" x2="1199.5" y2="295" stroke="#00ff00" stroke-width="1"/>
<text x="1199" y="241.5" fill="#ffffff" font-size="10" text-anchor="middle" font-weight="bold" font-family="Liberation Serif" transform-origin="1199 241" >14</text>
<circle cx="1335.5" cy="237.5" r="7" fill="none" stroke="#00ff00" stroke-width="1"/>
<line x1="1335.5" y1="244" x2="1335.5" y2="295" stroke="#00ff00" stroke-width="1"/>
<text x="1335.5" y="241.5" fill="#ffffff" font-size="10" text-anchor="middle" font-weight="bold" font-family="Liberation Serif" transform-origin="1335.5 241" >15</text>
<circle cx="1472" cy="237.5" r="7" fill="none" stroke="#00ff00" stroke-width="1"/>
<line x1="1472.5" y1="244" x2="1472.5" y2="295" stroke="#00ff00" stroke-width="1"/>
<text x="1472" y="241.5" fill="#ffffff" font-size="10" text-anchor="middle" font-weight="bold" font-family="Liberation Serif" transform-origin="1472 241" >16</text>
<circle cx="1507.5" cy="237.5" r="7" fill="none" stroke="#00ff00" stroke-width="1"/>
<line x1="1507.5" y1="244" x2="1507.5" y2="295" stroke="#00ff00" stroke-width="1"/>
<text x="1507.5" y="241.5" fill="#ffffff" font-size="7" text-anchor="middle" font-weight="bold" font-family="Liberation Serif" transform-origin="1507.5 241" >1/16</text>
<line x1="796" y1="257.5" x2="1484" y2="257.5" stroke="#00ff00" stroke-width="1"/>
<line x1="782" y1="274.5" x2="1484" y2="274.5" stroke="#00ff00" stroke-width="1"/>
<line x1="797.5" y1="254" x2="797.5" y2="287" stroke="#00ff00" stroke-width="1"/>
<line x1="1479.5" y1="250" x2="1479.5" y2="296" stroke="#00ff00" stroke-width="1"/>
<text x="795" y="272" fill="#ffffff" font-size="7" text-anchor="middle" font-weight="bold">1500</text>
<text x="858" y="272" fill="#ffffff" font-size="7" text-anchor="middle" font-weight="bold">5400</text>
<text x="919" y="272" fill="#ffffff" font-size="7" text-anchor="middle" font-weight="bold">600</text>
<text x="945" y="272" fill="#ffffff" font-size="7" text-anchor="middle" font-weight="bold">2400</text>
<text x="988" y="272" fill="#ffffff" font-size="7" text-anchor="middle" font-weight="bold">2400</text>
<text x="1034" y="272" fill="#ffffff" font-size="7" text-anchor="middle" font-weight="bold">2400</text>
<text x="1086" y="272" fill="#ffffff" font-size="7" text-anchor="middle" font-weight="bold">2400</text>
<text x="1133" y="272" fill="#ffffff" font-size="7" text-anchor="middle" font-weight="bold">2400</text>
<text x="1178" y="272" fill="#ffffff" font-size="7" text-anchor="middle" font-weight="bold">2400</text>
<text x="1267" y="272" fill="#ffffff" font-size="7" text-anchor="middle" font-weight="bold">6300</text>
<text x="1403" y="272" fill="#ffffff" font-size="7" text-anchor="middle" font-weight="bold">6000</text>
<text x="1476" y="272" fill="#ffffff" font-size="7" text-anchor="middle" font-weight="bold">600</text>
<text x="1139" y="255" fill="#ffffff" font-size="7" text-anchor="middle" font-weight="bold">40500</text>
<circle cx="784" cy="1046" r="7" fill="none" stroke="#00ff00" stroke-width="1"/>
<line x1="784.5" y1="987" x2="784.5" y2="1039" stroke="#00ff00" stroke-width="1"/>
<text x="784" y="1050" fill="#ffffff" font-size="10" text-anchor="middle" font-weight="bold" font-family="Liberation Serif">8</text>
<circle cx="807" cy="1046" r="7" fill="none" stroke="#00ff00" stroke-width="1"/>
<line x1="807.5" y1="987" x2="807.5" y2="1039" stroke="#00ff00" stroke-width="1"/>
<text x="807" y="1050" fill="#ffffff" font-size="10" text-anchor="middle" font-weight="bold" font-family="Liberation Serif">9</text>
<circle cx="926" cy="1046" r="7" fill="none" stroke="#00ff00" stroke-width="1"/>
<line x1="926.5" y1="987" x2="926.5" y2="1039" stroke="#00ff00" stroke-width="1"/>
<text x="926" y="1050" fill="#ffffff" font-size="10" text-anchor="middle" font-weight="bold" font-family="Liberation Serif">11</text>
<circle cx="965" cy="1046" r="7" fill="none" stroke="#00ff00" stroke-width="1"/>
<line x1="965.5" y1="987" x2="965.5" y2="1039" stroke="#00ff00" stroke-width="1"/>
<text x="965" y="1050" fill="#ffffff" font-size="7" text-anchor="middle" font-weight="bold" font-family="Liberation Serif">1/11</text>
<circle cx="1012" cy="1046" r="7" fill="none" stroke="#00ff00" stroke-width="1"/>
<line x1="1012.5" y1="987" x2="1012.5" y2="1039" stroke="#00ff00" stroke-width="1"/>
<text x="1012" y="1050" fill="#ffffff" font-size="7" text-anchor="middle" font-weight="bold" font-family="Liberation Serif">1/12</text>
<circle cx="1049" cy="1046" r="7" fill="none" stroke="#00ff00" stroke-width="1"/>
<line x1="1055.5" y1="987" x2="1055.5" y2="1033" stroke="#00ff00" stroke-width="1"/>
<line x1="1055.5" y1="1033" x2="1049.5" y2="1039" stroke="#00ff00" stroke-width="1"/>
<text x="1049" y="1050" fill="#ffffff" font-size="7" text-anchor="middle" font-weight="bold" font-family="Liberation Serif">2/12</text>
<circle cx="1070" cy="1046" r="7" fill="none" stroke="#00ff00" stroke-width="1"/>
<line x1="1062.5" y1="987" x2="1062.5" y2="1033" stroke="#00ff00" stroke-width="1"/>
<line x1="1062.5" y1="1033" x2="1069.5" y2="1039" stroke="#00ff00" stroke-width="1"/>
<text x="1070" y="1050" fill="#ffffff" font-size="10" text-anchor="middle" font-weight="bold" font-family="Liberation Serif">13</text>
<circle cx="1111" cy="1046" r="7" fill="none" stroke="#00ff00" stroke-width="1"/>
<line x1="1111.5" y1="987" x2="1111.5" y2="1039" stroke="#00ff00" stroke-width="1"/>
<text x="1111" y="1050" fill="#ffffff" font-size="7" text-anchor="middle" font-weight="bold" font-family="Liberation Serif">1/13</text>
<circle cx="1155" cy="1046" r="7" fill="none" stroke="#00ff00" stroke-width="1"/>
<line x1="1155.5" y1="987" x2="1155.5" y2="1039" stroke="#00ff00" stroke-width="1"/>
<text x="1155" y="1050" fill="#ffffff" font-size="7" text-anchor="middle" font-weight="bold" font-family="Liberation Serif">2/13</text>
<circle cx="1199" cy="1046" r="7" fill="none" stroke="#00ff00" stroke-width="1"/>
<line x1="1199.5" y1="987" x2="1199.5" y2="1039" stroke="#00ff00" stroke-width="1"/>
<text x="1199" y="1050" fill="#ffffff" font-size="10" text-anchor="middle" font-weight="bold" font-family="Liberation Serif">14</text>
<circle cx="1335.5" cy="1046" r="7" fill="none" stroke="#00ff00" stroke-width="1"/>
<line x1="1335.5" y1="987" x2="1335.5" y2="1039" stroke="#00ff00" stroke-width="1"/>
<text x="1335.5" y="1050" fill="#ffffff" font-size="10" text-anchor="middle" font-weight="bold" font-family="Liberation Serif">15</text>
<circle cx="1472" cy="1046" r="7" fill="none" stroke="#00ff00" stroke-width="1"/>
<line x1="1472.5" y1="987" x2="1472.5" y2="1039" stroke="#00ff00" stroke-width="1"/>
<text x="1472" y="1050" fill="#ffffff" font-size="10" text-anchor="middle" font-weight="bold" font-family="Liberation Serif">16</text>
<circle cx="1507" cy="1046" r="7" fill="none" stroke="#00ff00" stroke-width="1"/>
<line x1="1507.5" y1="987" x2="1507.5" y2="1039" stroke="#00ff00" stroke-width="1"/>
<text x="1507" y="1050" fill="#ffffff" font-size="7" text-anchor="middle" font-weight="bold" font-family="Liberation Serif">1/16</text>
<line x1="782" y1="1010.5" x2="1509" y2="1010.5" stroke="#00ff00" stroke-width="1"/>
<line x1="796" y1="1027.5" x2="1504" y2="1027.5" stroke="#00ff00" stroke-width="1"/>
<line x1="797.5" y1="995" x2="797.5" y2="1033" stroke="#00ff00" stroke-width="1"/>
<line x1="1503.5" y1="995" x2="1503.5" y2="1033" stroke="#00ff00" stroke-width="1"/>
<text x="795" y="1006" fill="#ffffff" font-size="7" text-anchor="middle" font-weight="bold">1500</text>
<text x="866" y="1006" fill="#ffffff" font-size="7" text-anchor="middle" font-weight="bold">7500</text>
<text x="945" y="1006" fill="#ffffff" font-size="7" text-anchor="middle" font-weight="bold">2400</text>
<text x="988" y="1006" fill="#ffffff" font-size="7" text-anchor="middle" font-weight="bold">2400</text>
<text x="1034" y="1006" fill="#ffffff" font-size="7" text-anchor="middle" font-weight="bold">2400</text>
<text x="1060" y="1006" fill="#ffffff" font-size="7" text-anchor="middle" font-weight="bold">600</text>
<text x="1086" y="1006" fill="#ffffff" font-size="7" text-anchor="middle" font-weight="bold">2400</text>
<text x="1133" y="1006" fill="#ffffff" font-size="7" text-anchor="middle" font-weight="bold">2400</text>
<text x="1177" y="1006" fill="#ffffff" font-size="7" text-anchor="middle" font-weight="bold">2400</text>
<text x="1267" y="1006" fill="#ffffff" font-size="7" text-anchor="middle" font-weight="bold">6300</text>
<text x="1403" y="1006" fill="#ffffff" font-size="7" text-anchor="middle" font-weight="bold">6000</text>
<text x="1487" y="1006" fill="#ffffff" font-size="7" text-anchor="middle" font-weight="bold">1500</text>
<text x="1503" y="1006" fill="#ffffff" font-size="7" text-anchor="middle" font-weight="bold">300</text>
<text x="1150" y="1025" fill="#ffffff" font-size="7" text-anchor="middle" font-weight="bold">41400</text>
<circle cx="642.5" cy="389" r="7" fill="none" stroke="#00ff00" stroke-width="1"/>
<line x1="650" y1="389.5" x2="717" y2="389.5" stroke="#00ff00" stroke-width="1"/>
<text x="642.5" y="393" fill="#ffffff" font-size="10" text-anchor="middle" font-weight="bold" font-family="Liberation Serif">F</text>
<circle cx="1632" cy="389" r="7" fill="none" stroke="#00ff00" stroke-width="1"/>
<line x1="1557" y1="389.5" x2="1625" y2="389.5" stroke="#00ff00" stroke-width="1"/>
<text x="1632" y="393" fill="#ffffff" font-size="10" text-anchor="middle" font-weight="bold" font-family="Liberation Serif">F</text>
<circle cx="642.5" cy="407.5" r="7" fill="none" stroke="#00ff00" stroke-width="1"/>
<line x1="650" y1="407.5" x2="717" y2="407.5" stroke="#00ff00" stroke-width="1"/>
<text x="642.5" y="411.5" fill="#ffffff" font-size="10" text-anchor="middle" font-weight="bold" font-family="Liberation Serif">E</text>
<circle cx="1632" cy="407.5" r="7" fill="none" stroke="#00ff00" stroke-width="1"/>
<line x1="1557" y1="407.5" x2="1625" y2="407.5" stroke="#00ff00" stroke-width="1"/>
<text x="1632" y="411.5" fill="#ffffff" font-size="10" text-anchor="middle" font-weight="bold" font-family="Liberation Serif">E</text>
<circle cx="642.5" cy="487" r="7" fill="none" stroke="#00ff00" stroke-width="1"/>
<line x1="650" y1="487.5" x2="717" y2="487.5" stroke="#00ff00" stroke-width="1"/>
<text x="642.5" y="491" fill="#ffffff" font-size="7" text-anchor="middle" font-weight="bold" font-family="Liberation Serif">1/D</text>
<circle cx="1632" cy="487" r="7" fill="none" stroke="#00ff00" stroke-width="1"/>
<line x1="1557" y1="487.5" x2="1625" y2="487.5" stroke="#00ff00" stroke-width="1"/>
<text x="1632" y="491" fill="#ffffff" font-size="7" text-anchor="middle" font-weight="bold" font-family="Liberation Serif">1/D</text>
<circle cx="642.5" cy="544" r="7" fill="none" stroke="#00ff00" stroke-width="1"/>
<line x1="650" y1="544.5" x2="717" y2="544.5" stroke="#00ff00" stroke-width="1"/>
<text x="642.5" y="548" fill="#ffffff" font-size="10" text-anchor="middle" font-weight="bold" font-family="Liberation Serif">D</text>
<circle cx="1632" cy="544" r="7" fill="none" stroke="#00ff00" stroke-width="1"/>
<line x1="1557" y1="544.5" x2="1625" y2="544.5" stroke="#00ff00" stroke-width="1"/>
<text x="1632" y="548" fill="#ffffff" font-size="10" text-anchor="middle" font-weight="bold" font-family="Liberation Serif">D</text>
<circle cx="642.5" cy="637" r="7" fill="none" stroke="#00ff00" stroke-width="1"/>
<line x1="650" y1="637.5" x2="717" y2="637.5" stroke="#00ff00" stroke-width="1"/>
<text x="642.5" y="641" fill="#ffffff" font-size="7" text-anchor="middle" font-weight="bold" font-family="Liberation Serif">1/C</text>
<circle cx="1632" cy="637" r="7" fill="none" stroke="#00ff00" stroke-width="1"/>
<line x1="1557" y1="637.5" x2="1625" y2="637.5" stroke="#00ff00" stroke-width="1"/>
<text x="1632" y="641" fill="#ffffff" font-size="7" text-anchor="middle" font-weight="bold" font-family="Liberation Serif">1/C</text>
<circle cx="642.5" cy="681" r="7" fill="none" stroke="#00ff00" stroke-width="1"/>
<line x1="650" y1="681.5" x2="717" y2="681.5" stroke="#00ff00" stroke-width="1"/>
<text x="642.5" y="685" fill="#ffffff" font-size="10" text-anchor="middle" font-weight="bold" font-family="Liberation Serif">C</text>
<circle cx="1632" cy="681" r="7" fill="none" stroke="#00ff00" stroke-width="1"/>
<line x1="1557" y1="681.5" x2="1625" y2="681.5" stroke="#00ff00" stroke-width="1"/>
<text x="1632" y="685" fill="#ffffff" font-size="10" text-anchor="middle" font-weight="bold" font-family="Liberation Serif">C</text>
<circle cx="642.5" cy="771.5" r="7" fill="none" stroke="#00ff00" stroke-width="1"/>
<line x1="650" y1="771.5" x2="717" y2="771.5" stroke="#00ff00" stroke-width="1"/>
<text x="642.5" y="775.5" fill="#ffffff" font-size="7" text-anchor="middle" font-weight="bold" font-family="Liberation Serif">2/B</text>
<circle cx="1632" cy="771.5" r="7" fill="none" stroke="#00ff00" stroke-width="1"/>
<line x1="1557" y1="771.5" x2="1625" y2="771.5" stroke="#00ff00" stroke-width="1"/>
<text x="1632" y="775.5" fill="#ffffff" font-size="7" text-anchor="middle" font-weight="bold" font-family="Liberation Serif">2/B</text>
<circle cx="642.5" cy="817" r="7" fill="none" stroke="#00ff00" stroke-width="1"/>
<line x1="650" y1="817.5" x2="717" y2="817.5" stroke="#00ff00" stroke-width="1"/>
<text x="642.5" y="821" fill="#ffffff" font-size="10" text-anchor="middle" font-weight="bold" font-family="Liberation Serif">B</text>
<circle cx="1632" cy="817" r="7" fill="none" stroke="#00ff00" stroke-width="1"/>
<line x1="1557" y1="817.5" x2="1625" y2="817.5" stroke="#00ff00" stroke-width="1"/>
<text x="1632" y="821" fill="#ffffff" font-size="10" text-anchor="middle" font-weight="bold" font-family="Liberation Serif">B</text>
<circle cx="642.5" cy="847.5" r="7" fill="none" stroke="#00ff00" stroke-width="1"/>
<line x1="650" y1="847.5" x2="717" y2="847.5" stroke="#00ff00" stroke-width="1"/>
<text x="642.5" y="851.5" fill="#ffffff" font-size="7" text-anchor="middle" font-weight="bold" font-family="Liberation Serif">2/A</text>
<circle cx="1632" cy="847.5" r="7" fill="none" stroke="#00ff00" stroke-width="1"/>
<line x1="1557" y1="847.5" x2="1625" y2="847.5" stroke="#00ff00" stroke-width="1"/>
<text x="1632" y="851.5" fill="#ffffff" font-size="7" text-anchor="middle" font-weight="bold" font-family="Liberation Serif">2/A</text>
<circle cx="642.5" cy="954.5" r="7" fill="none" stroke="#00ff00" stroke-width="1"/>
<line x1="650" y1="954.5" x2="717" y2="954.5" stroke="#00ff00" stroke-width="1"/>
<text x="642.5" y="958.5" fill="#ffffff" font-size="10" text-anchor="middle" font-weight="bold" font-family="Liberation Serif">A</text>
<circle cx="1632" cy="954.5" r="7" fill="none" stroke="#00ff00" stroke-width="1"/>
<line x1="1557" y1="954.5" x2="1625" y2="954.5" stroke="#00ff00" stroke-width="1"/>
<text x="1632" y="958.5" fill="#ffffff" font-size="10" text-anchor="middle" font-weight="bold" font-family="Liberation Serif">A</text>
<line x1="662.5" y1="397" x2="662.5" y2="849" stroke="#00ff00" stroke-width="1"/>
<line x1="680.5" y1="397" x2="680.5" y2="956" stroke="#00ff00" stroke-width="1"/>
<line x1="668" y1="398.5" x2="708" y2="398.5" stroke="#00ff00" stroke-width="1"/>
<line x1="1613.5" y1="397" x2="1613.5" y2="849" stroke="#00ff00" stroke-width="1"/>
<line x1="1557" y1="398.5" x2="1620" y2="398.5" stroke="#00ff00" stroke-width="1"/>
<text x="676" y="400" fill="#ffffff" font-size="7" text-anchor="middle" font-weight="bold" transform="rotate(-90 676 397)">1200</text>
<text x="676" y="450" fill="#ffffff" font-size="7" text-anchor="middle" font-weight="bold" transform="rotate(-90 676 447)">4500</text>
<text x="676" y="518" fill="#ffffff" font-size="7" text-anchor="middle" font-weight="bold" transform="rotate(-90 676 515)">3000</text>
<text x="676" y="593" fill="#ffffff" font-size="7" text-anchor="middle" font-weight="bold" transform="rotate(-90 676 590)">4800</text>
<text x="676" y="662" fill="#ffffff" font-size="7" text-anchor="middle" font-weight="bold" transform="rotate(-90 676 659)">2400</text>
<text x="676" y="729" fill="#ffffff" font-size="7" text-anchor="middle" font-weight="bold" transform="rotate(-90 676 726)">4800</text>
<text x="676" y="797" fill="#ffffff" font-size="7" text-anchor="middle" font-weight="bold" transform="rotate(-90 676 794)">2400</text>
<text x="676" y="835" fill="#ffffff" font-size="7" text-anchor="middle" font-weight="bold" transform="rotate(-90 676 832)">1800</text>
<text x="676" y="903" fill="#ffffff" font-size="7" text-anchor="middle" font-weight="bold" transform="rotate(-90 676 900)">5400</text>
<text x="658" y="623" fill="#ffffff" font-size="7" text-anchor="middle" font-weight="bold" transform="rotate(-90 658 623)">30600</text>
<text x="1609" y="623" fill="#ffffff" font-size="7" text-anchor="middle" font-weight="bold" transform="rotate(-90 1609 623)">30600</text>
<text x="1045" y="1100" fill="#ffff00" font-size="22" font-family="Liberation Serif" font-weight="bold" textLength="95" lengthAdjust="spacingAndGlyphs">弱电平面图</text>
<text x="1173" y="1098" fill="#ffff00" font-size="17" font-family="Liberation Serif" font-weight="bold" textLength="33" lengthAdjust="spacingAndGlyphs">1:100</text>
<rect x="1038" y="1105" width="177" height="4" fill="#ffff00"/>
<line x1="1038" y1="1111.5" x2="1214" y2="1111.5" stroke="#ffff00" stroke-width="1"/>
<rect x="797" y="398" width="19" height="20" fill="#c0c0c0"/>
<rect x="797" y="535" width="19" height="19" fill="#c0c0c0"/>
<rect x="797" y="671" width="19" height="20" fill="#c0c0c0"/>
<rect x="797" y="807" width="19" height="20" fill="#c0c0c0"/>
<rect x="1326" y="398" width="19" height="20" fill="#c0c0c0"/>
<rect x="1462" y="398" width="20" height="20" fill="#c0c0c0"/>
<rect x="1326" y="535" width="19" height="19" fill="#c0c0c0"/>
<rect x="1462" y="535" width="20" height="19" fill="#c0c0c0"/>
<rect x="1326" y="672" width="19" height="19" fill="#c0c0c0"/>
<rect x="1462" y="672" width="20" height="19" fill="#c0c0c0"/>
<rect x="1326" y="762" width="19" height="19" fill="#c0c0c0"/>
<rect x="916" y="671" width="20" height="20" fill="#c0c0c0"/>
<rect x="916" y="807" width="20" height="20" fill="#c0c0c0"/>
<rect x="1053" y="671" width="19" height="20" fill="#c0c0c0"/>
<rect x="1053" y="807" width="19" height="20" fill="#c0c0c0"/>
<rect x="1189" y="671" width="20" height="20" fill="#c0c0c0"/>
<rect x="1189" y="807" width="20" height="20" fill="#c0c0c0"/>
<rect x="1328" y="382" width="14" height="15" fill="#c0c0c0"/>
<rect x="1465" y="382" width="14" height="15" fill="#c0c0c0"/>
<rect x="1191" y="382" width="15" height="14" fill="#c0c0c0"/>
<rect x="776" y="810" width="16" height="15" fill="#c0c0c0"/>
<rect x="776" y="946" width="16" height="16" fill="#c0c0c0"/>
<polygon points="920,382 927,382 934,389 934,396 920,396" fill="#c0c0c0"/>
<polygon points="1069,382 1062,382 1055,389 1055,396 1069,396" fill="#c0c0c0"/>
<line x1="795.5" y1="397" x2="795.5" y2="616" stroke="#ff00ff" stroke-width="1"/>
<line x1="795" y1="397.5" x2="918" y2="397.5" stroke="#ff00ff" stroke-width="1"/>
<line x1="755" y1="616.5" x2="795" y2="616.5" stroke="#ff00ff" stroke-width="1"/>
<line x1="797.5" y1="418" x2="797.5" y2="438" stroke="#00ffff" stroke-width="1"/>
<line x1="801.5" y1="418" x2="801.5" y2="438" stroke="#00ffff" stroke-width="1"/>
<line x1="797.5" y1="438" x2="797.5" y2="513" stroke="#00ff00" stroke-width="1"/>
<line x1="799.5" y1="438" x2="799.5" y2="513" stroke="#00ff00" stroke-width="1"/>
<line x1="801.5" y1="438" x2="801.5" y2="513" stroke="#00ff00" stroke-width="1"/>
<line x1="797.5" y1="513" x2="797.5" y2="535" stroke="#00ffff" stroke-width="1"/>
<line x1="801.5" y1="513" x2="801.5" y2="535" stroke="#00ffff" stroke-width="1"/>
<line x1="797.5" y1="554" x2="797.5" y2="583" stroke="#00ff00" stroke-width="1"/>
<line x1="799.5" y1="554" x2="799.5" y2="583" stroke="#00ff00" stroke-width="1"/>
<line x1="801.5" y1="554" x2="801.5" y2="583" stroke="#00ff00" stroke-width="1"/>
<line x1="797" y1="583.5" x2="801" y2="583.5" stroke="#00ffff" stroke-width="1"/>
<line x1="797.5" y1="583" x2="797.5" y2="671" stroke="#00ffff" stroke-width="1"/>
<line x1="801.5" y1="583" x2="801.5" y2="671" stroke="#00ffff" stroke-width="1"/>
<line x1="797.5" y1="691" x2="797.5" y2="807" stroke="#00ffff" stroke-width="1"/>
<line x1="801.5" y1="691" x2="801.5" y2="807" stroke="#00ffff" stroke-width="1"/>
<line x1="816" y1="397.5" x2="891" y2="397.5" stroke="#00ff00" stroke-width="1"/>
<line x1="816" y1="399.5" x2="891" y2="399.5" stroke="#00ff00" stroke-width="1"/>
<line x1="816" y1="402.5" x2="891" y2="402.5" stroke="#00ff00" stroke-width="1"/>
<line x1="846" y1="399.5" x2="862" y2="399.5" stroke="#00ffff" stroke-width="1"/>
<line x1="846" y1="402.5" x2="862" y2="402.5" stroke="#00ffff" stroke-width="1"/>
<line x1="852.5" y1="403" x2="852.5" y2="653" stroke="#00ffff" stroke-width="1"/>
<line x1="855.5" y1="403" x2="855.5" y2="653" stroke="#00ffff" stroke-width="1"/>
<path d="M844,408 L844,405 L852,405 L852,408 M848,405 L848,402" fill="none" stroke="#00ff00" stroke-width="1"/>
<rect x="846" y="407" width="4" height="4" fill="#00ff00"/>
<path d="M854,408 L854,405 L862,405 L862,408 M858,405 L858,402" fill="none" stroke="#00ff00" stroke-width="1"/>
<rect x="856" y="407" width="4" height="4" fill="#00ff00"/>
<path d="M812,512 L806,512 L806,522 L812,522 M806,517 L802,517" fill="none" stroke="#00ff00" stroke-width="1"/>
<rect x="809" y="515" width="4" height="4" fill="#00ff00"/>
<path d="M812,524 L806,524 L806,534 L812,534 M806,529 L802,529" fill="none" stroke="#00ff00" stroke-width="1"/>
<rect x="809" y="527" width="4" height="4" fill="#00ff00"/>
<path d="M812,591 L806,591 L806,601 L812,601 M806,596 L802,596" fill="none" stroke="#00ff00" stroke-width="1"/>
<rect x="809" y="594" width="4" height="4" fill="#00ff00"/>
<path d="M812,605 L806,605 L806,615 L812,615 M806,610 L802,610" fill="none" stroke="#00ff00" stroke-width="1"/>
<rect x="809" y="608" width="4" height="4" fill="#00ff00"/>
<line x1="809" y1="521.5" x2="822" y2="521.5" stroke="#00ffff" stroke-width="1"/>
<line x1="822.5" y1="521" x2="822.5" y2="653" stroke="#00ffff" stroke-width="1"/>
<line x1="809" y1="532.5" x2="818" y2="532.5" stroke="#00ffff" stroke-width="1"/>
<line x1="818.5" y1="532" x2="818.5" y2="653" stroke="#00ffff" stroke-width="1"/>
<line x1="809" y1="600.5" x2="812" y2="600.5" stroke="#00ffff" stroke-width="1"/>
<line x1="812.5" y1="600" x2="812.5" y2="653" stroke="#00ffff" stroke-width="1"/>
<line x1="809" y1="613.5" x2="808" y2="613.5" stroke="#00ffff" stroke-width="1"/>
<line x1="808.5" y1="613" x2="808.5" y2="653" stroke="#00ffff" stroke-width="1"/>
<path d="M908,494 L914,494 L914,504 L908,504 M914,499 L918,499" fill="none" stroke="#00ff00" stroke-width="1"/>
<rect x="907" y="497" width="4" height="4" fill="#00ff00"/>
<path d="M908,507 L914,507 L914,517 L908,517 M914,512 L918,512" fill="none" stroke="#00ff00" stroke-width="1"/>
<rect x="907" y="510" width="4" height="4" fill="#00ff00"/>
<path d="M908,563 L914,563 L914,573 L908,573 M914,568 L918,568" fill="none" stroke="#00ff00" stroke-width="1"/>
<rect x="907" y="566" width="4" height="4" fill="#00ff00"/>
<path d="M908,576 L914,576 L914,586 L908,586 M914,581 L918,581" fill="none" stroke="#00ff00" stroke-width="1"/>
<rect x="907" y="579" width="4" height="4" fill="#00ff00"/>
<line x1="894.5" y1="503" x2="894.5" y2="653" stroke="#00ffff" stroke-width="1"/>
<line x1="894" y1="503.5" x2="908" y2="503.5" stroke="#00ffff" stroke-width="1"/>
<line x1="902.5" y1="516" x2="902.5" y2="653" stroke="#00ffff" stroke-width="1"/>
<line x1="902" y1="516.5" x2="908" y2="516.5" stroke="#00ffff" stroke-width="1"/>
<line x1="905.5" y1="571" x2="905.5" y2="653" stroke="#00ffff" stroke-width="1"/>
<line x1="905" y1="571.5" x2="908" y2="571.5" stroke="#00ffff" stroke-width="1"/>
<line x1="913.5" y1="584" x2="913.5" y2="653" stroke="#00ffff" stroke-width="1"/>
<line x1="801" y1="638.5" x2="816" y2="638.5" stroke="#00ffff" stroke-width="1"/>
<line x1="832" y1="638.5" x2="892" y2="638.5" stroke="#00ffff" stroke-width="1"/>
<line x1="908" y1="638.5" x2="916" y2="638.5" stroke="#00ffff" stroke-width="1"/>
<line x1="801" y1="641.5" x2="816" y2="641.5" stroke="#00ffff" stroke-width="1"/>
<line x1="832" y1="641.5" x2="892" y2="641.5" stroke="#00ffff" stroke-width="1"/>
<line x1="908" y1="641.5" x2="916" y2="641.5" stroke="#00ffff" stroke-width="1"/>
<line x1="816.5" y1="622" x2="816.5" y2="641" stroke="#00ff00" stroke-width="1"/>
<path d="M816,622 Q830,624 832,641" fill="none" stroke="#00ff00" stroke-width="1"/>
<line x1="908.5" y1="622" x2="908.5" y2="641" stroke="#00ff00" stroke-width="1"/>
<path d="M908,622 Q894,624 892,641" fill="none" stroke="#00ff00" stroke-width="1"/>
<path d="M861,632 L861,629 L867,629 L867,632 M864,629 L864,626" fill="none" stroke="#00ff00" stroke-width="1"/>
<line x1="864.5" y1="638" x2="864.5" y2="653" stroke="#00ffff" stroke-width="1"/>
<rect x="900.5" y="413.5" width="16" height="22" fill="none" stroke="#ffffff" stroke-width="1"/>
<rect x="900.5" y="437.5" width="16" height="20" fill="none" stroke="#ffffff" stroke-width="1"/>
<rect x="900.5" y="459.5" width="16" height="20" fill="none" stroke="#ffffff" stroke-width="1"/>
<path d="M903,433 Q904,418 914,415" fill="none" stroke="#ffffff" stroke-width="1"/>
<path d="M903,455 Q904,441 914,439" fill="none" stroke="#ffffff" stroke-width="1"/>
<path d="M903,477 Q904,463 914,461" fill="none" stroke="#ffffff" stroke-width="1"/>
<polyline points="908,481 908,490 916,490" fill="none" stroke="#ff0000" stroke-width="1"/>
<polyline points="912,481 912,486 916,486" fill="none" stroke="#ff0000" stroke-width="1"/>
<text x="825" y="473" fill="#ffffff" font-size="9" text-anchor="middle" font-weight="bold">写字间</text>
<text x="875" y="512" fill="#ffffff" font-size="8" text-anchor="middle" font-weight="bold" font-family="Liberation Serif">1P-B-4~14</text>
<text x="875" y="525" fill="#ffffff" font-size="8" text-anchor="middle" font-weight="bold" font-family="Liberation Serif">VP-B-4~14</text>
<text x="850" y="460" fill="#ffffff" font-size="6" font-weight="bold">D</text>
<text x="860" y="456" fill="#ffffff" font-size="6" font-weight="bold">P</text>
<text x="818" y="517" fill="#ffffff" font-size="6" font-weight="bold">P</text>
<text x="815" y="530" fill="#ffffff" font-size="6" font-weight="bold">D</text>
<text x="890" y="536" fill="#ffffff" font-size="6" font-weight="bold">P</text>
<text x="908" y="541" fill="#ffffff" font-size="6" font-weight="bold">D</text>
<line x1="917.5" y1="306" x2="917.5" y2="397" stroke="#ff00ff" stroke-width="1"/>
<line x1="919.5" y1="305" x2="919.5" y2="397" stroke="#ffff00" stroke-width="1"/>
<line x1="926.5" y1="306" x2="926.5" y2="390" stroke="#ffff00" stroke-width="1"/>
<line x1="1062.5" y1="306" x2="1062.5" y2="333" stroke="#ffff00" stroke-width="1"/>
<line x1="1069.5" y1="306" x2="1069.5" y2="354" stroke="#ffff00" stroke-width="1"/>
<line x1="1062.5" y1="380" x2="1062.5" y2="390" stroke="#ffff00" stroke-width="1"/>
<line x1="1069.5" y1="378" x2="1069.5" y2="396" stroke="#ffff00" stroke-width="1"/>
<line x1="926" y1="332.5" x2="1062" y2="332.5" stroke="#ffff00" stroke-width="1"/>
<line x1="926" y1="335.5" x2="1062" y2="335.5" stroke="#ffff00" stroke-width="1"/>
<line x1="926" y1="389.5" x2="1062" y2="389.5" stroke="#ffff00" stroke-width="1"/>
<line x1="919.5" y1="339" x2="919.5" y2="364" stroke="#00ff00" stroke-width="1"/>
<line x1="921.5" y1="339" x2="921.5" y2="364" stroke="#00ff00" stroke-width="1"/>
<line x1="924.5" y1="339" x2="924.5" y2="364" stroke="#00ff00" stroke-width="1"/>
<line x1="919" y1="339.5" x2="926" y2="339.5" stroke="#ffff00" stroke-width="1"/>
<line x1="919" y1="364.5" x2="926" y2="364.5" stroke="#ffff00" stroke-width="1"/>
<line x1="958.5" y1="335" x2="958.5" y2="361" stroke="#ff00ff" stroke-width="1"/>
<line x1="958.5" y1="367" x2="958.5" y2="389" stroke="#ff00ff" stroke-width="1"/>
<line x1="962.5" y1="335" x2="962.5" y2="361" stroke="#ff00ff" stroke-width="1"/>
<line x1="962.5" y1="367" x2="962.5" y2="389" stroke="#ff00ff" stroke-width="1"/>
<line x1="967.5" y1="335" x2="967.5" y2="361" stroke="#ff00ff" stroke-width="1"/>
<line x1="967.5" y1="367" x2="967.5" y2="389" stroke="#ff00ff" stroke-width="1"/>
<line x1="971.5" y1="335" x2="971.5" y2="361" stroke="#ff00ff" stroke-width="1"/>
<line x1="971.5" y1="367" x2="971.5" y2="389" stroke="#ff00ff" stroke-width="1"/>
<line x1="976.5" y1="335" x2="976.5" y2="361" stroke="#ff00ff" stroke-width="1"/>
<line x1="976.5" y1="367" x2="976.5" y2="389" stroke="#ff00ff" stroke-width="1"/>
<line x1="980.5" y1="335" x2="980.5" y2="361" stroke="#ff00ff" stroke-width="1"/>
<line x1="980.5" y1="367" x2="980.5" y2="389" stroke="#ff00ff" stroke-width="1"/>
<line x1="985.5" y1="335" x2="985.5" y2="361" stroke="#ff00ff" stroke-width="1"/>
<line x1="985.5" y1="367" x2="985.5" y2="389" stroke="#ff00ff" stroke-width="1"/>
<line x1="989.5" y1="335" x2="989.5" y2="361" stroke="#ff00ff" stroke-width="1"/>
<line x1="989.5" y1="367" x2="989.5" y2="389" stroke="#ff00ff" stroke-width="1"/>
<line x1="994.5" y1="335" x2="994.5" y2="361" stroke="#ff00ff" stroke-width="1"/>
<line x1="994.5" y1="367" x2="994.5" y2="389" stroke="#ff00ff" stroke-width="1"/>
<line x1="998.5" y1="335" x2="998.5" y2="361" stroke="#ff00ff" stroke-width="1"/>
<line x1="998.5" y1="367" x2="998.5" y2="389" stroke="#ff00ff" stroke-width="1"/>
<line x1="1003.5" y1="335" x2="1003.5" y2="361" stroke="#ff00ff" stroke-width="1"/>
<line x1="1003.5" y1="367" x2="1003.5" y2="389" stroke="#ff00ff" stroke-width="1"/>
<line x1="1007.5" y1="335" x2="1007.5" y2="361" stroke="#ff00ff" stroke-width="1"/>
<line x1="1007.5" y1="367" x2="1007.5" y2="389" stroke="#ff00ff" stroke-width="1"/>
<line x1="1012.5" y1="335" x2="1012.5" y2="361" stroke="#ff00ff" stroke-width="1"/>
<line x1="1012.5" y1="367" x2="1012.5" y2="389" stroke="#ff00ff" stroke-width="1"/>
<line x1="1016.5" y1="335" x2="1016.5" y2="361" stroke="#ff00ff" stroke-width="1"/>
<line x1="1016.5" y1="367" x2="1016.5" y2="389" stroke="#ff00ff" stroke-width="1"/>
<rect x="958" y="361" width="64" height="6" fill="#ff00ff"/>
<rect x="960" y="362.5" width="60" height="3" fill="#000"/>
<polyline points="972,348 947,348 947,376 970,376" fill="none" stroke="#ff00ff" stroke-width="1"/>
<line x1="1002" y1="348.5" x2="1031" y2="348.5" stroke="#ff00ff" stroke-width="1"/>
<line x1="1000" y1="376.5" x2="1029" y2="376.5" stroke="#ff00ff" stroke-width="1"/>
<line x1="980" y1="361" x2="994" y2="336" stroke="#ff00ff" stroke-width="1"/>
<line x1="982" y1="361" x2="996" y2="336" stroke="#ff00ff" stroke-width="1"/>
<path d="M1070,354 Q1060,354 1061,362 Q1062,367 1067,368 Q1060,370 1060,377 Q1061,379 1069,380" fill="none" stroke="#00ff00" stroke-width="1"/>
<line x1="1110.5" y1="306" x2="1110.5" y2="392" stroke="#00ffff" stroke-width="1"/>
<line x1="1113.5" y1="306" x2="1113.5" y2="392" stroke="#00ffff" stroke-width="1"/>
<line x1="1069" y1="332.5" x2="1076" y2="332.5" stroke="#00ffff" stroke-width="1"/>
<line x1="1069" y1="335.5" x2="1076" y2="335.5" stroke="#00ffff" stroke-width="1"/>
<line x1="1100" y1="332.5" x2="1110" y2="332.5" stroke="#00ffff" stroke-width="1"/>
<line x1="1100" y1="335.5" x2="1110" y2="335.5" stroke="#00ffff" stroke-width="1"/>
<path d="M1077,345 Q1090,345 1093,333 Q1096,345 1100,345" fill="none" stroke="#00ff00" stroke-width="1"/>
<line x1="1076.5" y1="335" x2="1076.5" y2="345" stroke="#00ff00" stroke-width="1"/>
<line x1="1100.5" y1="335" x2="1100.5" y2="345" stroke="#00ff00" stroke-width="1"/>
<line x1="1086" y1="402" x2="1119" y2="342" stroke="#ffffff" stroke-width="1"/>
<line x1="1119" y1="341.5" x2="1151" y2="341.5" stroke="#ffffff" stroke-width="1"/>
<text x="1120" y="339" fill="#ffffff" font-size="9" font-weight="bold" textLength="38" lengthAdjust="spacingAndGlyphs">4层为防火门</text>
<line x1="1069" y1="392.5" x2="1110" y2="392.5" stroke="#00ffff" stroke-width="1"/>
<line x1="1069" y1="396.5" x2="1110" y2="396.5" stroke="#00ffff" stroke-width="1"/>
<line x1="1077" y1="392.5" x2="1101" y2="392.5" stroke="#00ff00" stroke-width="1"/>
<line x1="1077" y1="396.5" x2="1101" y2="396.5" stroke="#00ff00" stroke-width="1"/>
<line x1="1076.5" y1="392" x2="1076.5" y2="396" stroke="#00ffff" stroke-width="1"/>
<line x1="1101.5" y1="392" x2="1101.5" y2="396" stroke="#00ffff" stroke-width="1"/>
<line x1="1076.5" y1="398" x2="1076.5" y2="408" stroke="#ffff00" stroke-width="1"/>
<line x1="1101.5" y1="398" x2="1101.5" y2="408" stroke="#ffff00" stroke-width="1"/>
<line x1="1168" y1="412" x2="1184" y2="397" stroke="#00ffff" stroke-width="1"/>
<rect x="1178.5" y="407.5" width="14" height="6" fill="none" stroke="#00ff00" stroke-width="1"/>
<line x1="1206" y1="392.5" x2="1328" y2="392.5" stroke="#00ffff" stroke-width="1"/>
<line x1="1206" y1="396.5" x2="1465" y2="396.5" stroke="#00ffff" stroke-width="1"/>
<line x1="1113" y1="392.5" x2="1191" y2="392.5" stroke="#00ffff" stroke-width="1"/>
<line x1="1342" y1="389.5" x2="1465" y2="389.5" stroke="#ffff00" stroke-width="1"/>
<line x1="1342" y1="396.5" x2="1465" y2="396.5" stroke="#ffff00" stroke-width="1"/>
<line x1="1501.5" y1="306" x2="1501.5" y2="393" stroke="#00ffff" stroke-width="1"/>
<line x1="1505.5" y1="306" x2="1505.5" y2="393" stroke="#00ffff" stroke-width="1"/>
<line x1="1509.5" y1="308" x2="1509.5" y2="397" stroke="#ff00ff" stroke-width="1"/>
<line x1="1482" y1="397.5" x2="1509" y2="397.5" stroke="#ff00ff" stroke-width="1"/>
<line x1="1479" y1="393.5" x2="1505" y2="393.5" stroke="#00ffff" stroke-width="1"/>
<line x1="1501.5" y1="356" x2="1501.5" y2="386" stroke="#00ff00" stroke-width="1"/>
<line x1="1503.5" y1="356" x2="1503.5" y2="386" stroke="#00ff00" stroke-width="1"/>
<line x1="1505.5" y1="356" x2="1505.5" y2="386" stroke="#00ff00" stroke-width="1"/>
<rect x="1451.5" y="367.5" width="27" height="21" fill="none" stroke="#00ffff" stroke-width="1"/>
<rect x="1453.5" y="369.5" width="12" height="17" fill="none" stroke="#ffffff" stroke-width="1"/>
<path d="M1456,385 Q1456,372 1464,371" fill="none" stroke="#ffffff" stroke-width="1"/>
<line x1="896" y1="398.5" x2="1076" y2="398.5" stroke="#ffff00" stroke-width="1"/>
<line x1="1101" y1="398.5" x2="1208" y2="398.5" stroke="#ffff00" stroke-width="1"/>
<line x1="896.5" y1="398" x2="896.5" y2="480" stroke="#ffff00" stroke-width="1"/>
<line x1="896" y1="480.5" x2="916" y2="480.5" stroke="#ffff00" stroke-width="1"/>
<line x1="916.5" y1="480" x2="916.5" y2="641" stroke="#ffff00" stroke-width="1"/>
<line x1="1208.5" y1="398" x2="1208.5" y2="641" stroke="#ffff00" stroke-width="1"/>
<line x1="916" y1="641.5" x2="1057" y2="641.5" stroke="#ffff00" stroke-width="1"/>
<line x1="1110" y1="641.5" x2="1208" y2="641.5" stroke="#ffff00" stroke-width="1"/>
<line x1="916" y1="641.5" x2="925" y2="641.5" stroke="#ffff00" stroke-width="1"/>
<line x1="1224.5" y1="402" x2="1224.5" y2="658" stroke="#ffffff" stroke-width="1"/>
<line x1="1228.5" y1="398" x2="1228.5" y2="658" stroke="#ffffff" stroke-width="1"/>
<line x1="801" y1="653.5" x2="1224" y2="653.5" stroke="#ffffff" stroke-width="1"/>
<line x1="801" y1="658.5" x2="1228" y2="658.5" stroke="#ffffff" stroke-width="1"/>
<line x1="1208" y1="398.5" x2="1482" y2="398.5" stroke="#00ffff" stroke-width="1"/>
<line x1="1208" y1="402.5" x2="1482" y2="402.5" stroke="#00ffff" stroke-width="1"/>
<line x1="1208" y1="392.5" x2="1224" y2="392.5" stroke="#00ffff" stroke-width="1"/>
<rect x="925.5" y="407.5" width="130" height="78" fill="none" stroke="#ffff00" stroke-width="1"/>
<line x1="940.5" y1="407" x2="940.5" y2="427" stroke="#ff00ff" stroke-width="1"/>
<line x1="973.5" y1="407" x2="973.5" y2="427" stroke="#ff00ff" stroke-width="1"/>
<line x1="988.5" y1="407" x2="988.5" y2="427" stroke="#ff00ff" stroke-width="1"/>
<line x1="925" y1="427.5" x2="955" y2="427.5" stroke="#ff00ff" stroke-width="1"/>
<line x1="958" y1="427.5" x2="1003" y2="427.5" stroke="#ff00ff" stroke-width="1"/>
<line x1="955.5" y1="407" x2="955.5" y2="450" stroke="#00ffff" stroke-width="1"/>
<line x1="958.5" y1="407" x2="958.5" y2="450" stroke="#00ffff" stroke-width="1"/>
<line x1="1003.5" y1="407" x2="1003.5" y2="450" stroke="#00ffff" stroke-width="1"/>
<line x1="1006.5" y1="407" x2="1006.5" y2="450" stroke="#00ffff" stroke-width="1"/>
<line x1="955" y1="450.5" x2="985" y2="450.5" stroke="#00ffff" stroke-width="1"/>
<line x1="1000" y1="450.5" x2="1010" y2="450.5" stroke="#00ffff" stroke-width="1"/>
<line x1="1027" y1="450.5" x2="1054" y2="450.5" stroke="#00ffff" stroke-width="1"/>
<line x1="971.5" y1="450" x2="971.5" y2="457" stroke="#00ffff" stroke-width="1"/>
<line x1="974.5" y1="450" x2="974.5" y2="457" stroke="#00ffff" stroke-width="1"/>
<line x1="971" y1="457.5" x2="974" y2="457.5" stroke="#00ffff" stroke-width="1"/>
<rect x="930.5" y="412.5" width="6" height="9" fill="none" stroke="#ff00ff" stroke-width="1"/>
<rect x="944.5" y="412.5" width="6" height="9" fill="none" stroke="#ff00ff" stroke-width="1"/>
<rect x="963.5" y="412.5" width="6" height="9" fill="none" stroke="#ff00ff" stroke-width="1"/>
<rect x="978.5" y="412.5" width="6" height="9" fill="none" stroke="#ff00ff" stroke-width="1"/>
<rect x="993.5" y="412.5" width="6" height="9" fill="none" stroke="#ff00ff" stroke-width="1"/>
<path d="M927,428 Q932,440 937,428 M942,428 Q947,440 952,428 M960,428 Q965,440 970,428 M975,428 Q980,440 985,428 M990,428 Q995,440 1000,428" fill="none" stroke="#ffffff" stroke-width="1"/>
<path d="M985,450 Q985,437 999,435 L999,450 M1010,450 L1010,435 Q1025,437 1027,450" fill="none" stroke="#00ff00" stroke-width="1"/>
<path d="M957,457 Q957,470 971,471 L971,485" fill="none" stroke="#00ff00" stroke-width="1"/>
<line x1="972.5" y1="471" x2="972.5" y2="485" stroke="#00ffff" stroke-width="1"/>
<rect x="1013.5" y="407.5" width="9" height="6" fill="none" stroke="#ff00ff" stroke-width="1"/>
<path d="M1013,413 L1022,413" fill="none" stroke="#ff00ff" stroke-width="1"/>
<circle cx="1032" cy="413" r="3.5" fill="none" stroke="#ff00ff" stroke-width="1"/>
<line x1="1028" y1="407.5" x2="1036" y2="407.5" stroke="#ff00ff" stroke-width="1"/>
<line x1="1044.5" y1="407" x2="1044.5" y2="449" stroke="#ffffff" stroke-width="1"/>
<text x="1049" y="448" fill="#ffffff" font-size="9" font-weight="bold">水</text>
<path d="M1054,420 Q1040,423 1038,428 Q1042,432 1050,436 M1054,431 Q1040,436 1038,440 Q1042,444 1050,447" fill="none" stroke="#00ff00" stroke-width="1"/>
<circle cx="1049" cy="426" r="3.5" fill="none" stroke="#00ff00" stroke-width="1"/>
<line x1="1054" y1="427.5" x2="1062" y2="427.5" stroke="#00ffff" stroke-width="1"/>
<line x1="1054.5" y1="450" x2="1054.5" y2="471" stroke="#00ff00" stroke-width="1"/>
<rect x="973.5" y="476.5" width="11" height="9" fill="none" stroke="#ff00ff" stroke-width="1"/>
<line x1="973" y1="476" x2="984" y2="485" stroke="#ff00ff" stroke-width="1"/>
<line x1="984" y1="476" x2="973" y2="485" stroke="#ff00ff" stroke-width="1"/>
<line x1="983" y1="475.5" x2="1054" y2="475.5" stroke="#ff00ff" stroke-width="1"/>
<path d="M989,481 a4.5,3 0 1 1 9,0 q-1,4 -4.5,4 q-3.5,0 -4.5,-4 M993.5,485 L993.5,481" fill="none" stroke="#ff00ff" stroke-width="1"/>
<path d="M1001,481 a4.5,3 0 1 1 9,0 q-1,4 -4.5,4 q-3.5,0 -4.5,-4 M1005.5,485 L1005.5,481" fill="none" stroke="#ff00ff" stroke-width="1"/>
<path d="M1013,481 a4.5,3 0 1 1 9,0 q-1,4 -4.5,4 q-3.5,0 -4.5,-4 M1017.5,485 L1017.5,481" fill="none" stroke="#ff00ff" stroke-width="1"/>
<path d="M1025,481 a4.5,3 0 1 1 9,0 q-1,4 -4.5,4 q-3.5,0 -4.5,-4 M1029.5,485 L1029.5,481" fill="none" stroke="#ff00ff" stroke-width="1"/>
<path d="M1037,481 a4.5,3 0 1 1 9,0 q-1,4 -4.5,4 q-3.5,0 -4.5,-4 M1041.5,485 L1041.5,481" fill="none" stroke="#ff00ff" stroke-width="1"/>
<path d="M930,485 L934,478 L938,485 M944,485 L948,478 L952,485" fill="none" stroke="#ff00ff" stroke-width="1"/>
<line x1="940.5" y1="476" x2="940.5" y2="485" stroke="#ff00ff" stroke-width="1"/>
<line x1="953.5" y1="474" x2="953.5" y2="485" stroke="#ff00ff" stroke-width="1"/>
<rect x="925.5" y="488.5" width="38" height="144" fill="none" stroke="#ffff00" stroke-width="1"/>
<rect x="925.5" y="488.5" width="38" height="14" fill="none" stroke="#ffffff" stroke-width="1"/>
<path d="M933,501 L933,492 L940,492 L943,501 M950,501 L950,492 L957,492 L960,501" fill="none" stroke="#ffffff" stroke-width="1"/>
<rect x="931.5" y="503.5" width="4" height="11" fill="none" stroke="#00ff00" stroke-width="1"/>
<rect x="957.5" y="513.5" width="4" height="11" fill="none" stroke="#00ff00" stroke-width="1"/>
<rect x="931.5" y="521.5" width="4" height="10" fill="none" stroke="#00ff00" stroke-width="1"/>
<text x="938" y="531" fill="#ffffff" font-size="8" font-weight="bold" font-family="Liberation Serif">JK-B-4~14</text>
<text x="940" y="560" fill="#ffffff" font-size="9" font-weight="bold">电</text>
<rect x="966.5" y="488.5" width="44" height="144" fill="none" stroke="#ffff00" stroke-width="1"/>
<line x1="966" y1="508.5" x2="1010" y2="508.5" stroke="#ff00ff" stroke-width="1"/>
<line x1="966" y1="514.5" x2="1010" y2="514.5" stroke="#ff00ff" stroke-width="1"/>
<line x1="966" y1="520.5" x2="1010" y2="520.5" stroke="#ff00ff" stroke-width="1"/>
<line x1="966" y1="526.5" x2="1010" y2="526.5" stroke="#ff00ff" stroke-width="1"/>
<line x1="966" y1="532.5" x2="1010" y2="532.5" stroke="#ff00ff" stroke-width="1"/>
<line x1="966" y1="539.5" x2="1010" y2="539.5" stroke="#ff00ff" stroke-width="1"/>
<line x1="966" y1="545.5" x2="1010" y2="545.5" stroke="#ff00ff" stroke-width="1"/>
<line x1="966" y1="551.5" x2="1010" y2="551.5" stroke="#ff00ff" stroke-width="1"/>
<line x1="966" y1="557.5" x2="1010" y2="557.5" stroke="#ff00ff" stroke-width="1"/>
<line x1="966" y1="563.5" x2="1010" y2="563.5" stroke="#ff00ff" stroke-width="1"/>
<rect x="987" y="509" width="3" height="60" fill="#ff00ff"/>
<rect x="976.5" y="503.5" width="25" height="67" fill="none" stroke="#ff00ff" stroke-width="1"/>
<line x1="990" y1="530" x2="1010" y2="519" stroke="#ff00ff" stroke-width="1"/>
<path d="M973,589 Q974,578 982,580 Q988,578 990,589 M974,632 Q975,620 982,622 Q988,620 990,632" fill="none" stroke="#00ff00" stroke-width="1"/>
<line x1="966" y1="589.5" x2="1010" y2="589.5" stroke="#ffff00" stroke-width="1"/>
<text x="977" y="613" fill="#ffffff" font-size="9" font-weight="bold">前室</text>
<rect x="1013.5" y="488.5" width="41" height="42" fill="none" stroke="#ffff00" stroke-width="1"/>
<rect x="1013.5" y="534.5" width="41" height="42" fill="none" stroke="#ffff00" stroke-width="1"/>
<rect x="1013.5" y="579.5" width="41" height="42" fill="none" stroke="#ffff00" stroke-width="1"/>
<rect x="1013.5" y="625.5" width="41" height="7" fill="none" stroke="#ffff00" stroke-width="1"/>
<rect x="1022.5" y="496.5" width="28" height="31" fill="none" stroke="#ff00ff" stroke-width="1.6"/>
<rect x="1016.5" y="503.5" width="3" height="15" fill="none" stroke="#ff00ff" stroke-width="1"/>
<rect x="1022.5" y="541.5" width="28" height="33" fill="none" stroke="#ff00ff" stroke-width="1.6"/>
<rect x="1016.5" y="548.5" width="3" height="15" fill="none" stroke="#ff00ff" stroke-width="1"/>
<rect x="1022.5" y="585.5" width="28" height="32" fill="none" stroke="#ff00ff" stroke-width="1.6"/>
<rect x="1016.5" y="592.5" width="3" height="15" fill="none" stroke="#ff00ff" stroke-width="1"/>
<text x="1020" y="632" fill="#ffffff" font-size="8" font-weight="bold">一</text>
<line x1="1057.5" y1="398" x2="1057.5" y2="641" stroke="#ffff00" stroke-width="1"/>
<line x1="1064.5" y1="427" x2="1064.5" y2="653" stroke="#00ffff" stroke-width="1"/>
<line x1="1090.5" y1="435" x2="1090.5" y2="653" stroke="#00ffff" stroke-width="1"/>
<line x1="1096.5" y1="462" x2="1096.5" y2="653" stroke="#00ffff" stroke-width="1"/>
<line x1="1107.5" y1="480" x2="1107.5" y2="653" stroke="#00ffff" stroke-width="1"/>
<line x1="1090" y1="462.5" x2="1110" y2="462.5" stroke="#00ffff" stroke-width="1"/>
<line x1="1057" y1="632.5" x2="1110" y2="632.5" stroke="#00ff00" stroke-width="1"/>
<line x1="1057" y1="641.5" x2="1110" y2="641.5" stroke="#00ff00" stroke-width="1"/>
<text x="1068" y="561" fill="#00ff00" font-size="7" font-weight="bold">电缆井</text>
<line x1="1110.5" y1="398" x2="1110.5" y2="641" stroke="#ffff00" stroke-width="1"/>
<rect x="1113.5" y="407.5" width="88" height="73" fill="none" stroke="#ffff00" stroke-width="1"/>
<rect x="1115.5" y="409.5" width="21" height="25" fill="none" stroke="#ffffff" stroke-width="1"/>
<text x="1120" y="427" fill="#ffffff" font-size="10" font-weight="bold">风</text>
<line x1="1113" y1="434.5" x2="1190" y2="434.5" stroke="#00ffff" stroke-width="1"/>
<line x1="1137.5" y1="407" x2="1137.5" y2="434" stroke="#00ffff" stroke-width="1"/>
<text x="1161" y="452" fill="#ffffff" font-size="9" font-weight="bold">新风机房</text>
<line x1="1113" y1="462.5" x2="1190" y2="462.5" stroke="#00ffff" stroke-width="1"/>
<circle cx="1193" cy="434" r="4.5" fill="none" stroke="#00ff00" stroke-width="1"/>
<circle cx="1193" cy="462" r="4.5" fill="none" stroke="#00ff00" stroke-width="1"/>
<line x1="1113" y1="473.5" x2="1201" y2="473.5" stroke="#ffffff" stroke-width="1"/>
<text x="1161" y="484" fill="#ffffff" font-size="9" font-weight="bold">水</text>
<rect x="1113.5" y="488.5" width="35" height="43" fill="none" stroke="#ffff00" stroke-width="1"/>
<rect x="1115.5" y="495.5" width="30" height="35" fill="none" stroke="#ff00ff" stroke-width="1.6"/>
<text x="1118" y="557" fill="#ffffff" font-size="8" font-weight="bold">消防电梯</text>
<rect x="1113.5" y="538.5" width="35" height="34" fill="none" stroke="#ffff00" stroke-width="1"/>
<rect x="1117.5" y="543.5" width="28" height="26" fill="none" stroke="#ff00ff" stroke-width="1.6"/>
<rect x="1156.5" y="488.5" width="45" height="84" fill="none" stroke="#ffff00" stroke-width="1"/>
<line x1="1156" y1="509.5" x2="1201" y2="509.5" stroke="#ff00ff" stroke-width="1"/>
<line x1="1156" y1="515.5" x2="1201" y2="515.5" stroke="#ff00ff" stroke-width="1"/>
<line x1="1156" y1="521.5" x2="1201" y2="521.5" stroke="#ff00ff" stroke-width="1"/>
<line x1="1156" y1="527.5" x2="1201" y2="527.5" stroke="#ff00ff" stroke-width="1"/>
<line x1="1156" y1="533.5" x2="1201" y2="533.5" stroke="#ff00ff" stroke-width="1"/>
<line x1="1156" y1="539.5" x2="1201" y2="539.5" stroke="#ff00ff" stroke-width="1"/>
<line x1="1156" y1="545.5" x2="1201" y2="545.5" stroke="#ff00ff" stroke-width="1"/>
<line x1="1156" y1="551.5" x2="1201" y2="551.5" stroke="#ff00ff" stroke-width="1"/>
<line x1="1156" y1="557.5" x2="1201" y2="557.5" stroke="#ff00ff" stroke-width="1"/>
<line x1="1156" y1="563.5" x2="1201" y2="563.5" stroke="#ff00ff" stroke-width="1"/>
<rect x="1177" y="509" width="3" height="60" fill="#ff00ff"/>
<rect x="1166.5" y="503.5" width="25" height="67" fill="none" stroke="#ff00ff" stroke-width="1"/>
<line x1="1158" y1="520" x2="1180" y2="535" stroke="#ff00ff" stroke-width="1"/>
<rect x="1113.5" y="573.5" width="88" height="59" fill="none" stroke="#ffff00" stroke-width="1"/>
<text x="1131" y="598" fill="#ffffff" font-size="9" font-weight="bold">前室</text>
<path d="M1166,589 Q1168,578 1175,580 Q1182,578 1184,589" fill="none" stroke="#00ff00" stroke-width="1"/>
<path d="M1112,600 Q1120,600 1121,607 Q1120,612 1112,613 Q1120,614 1121,620 Q1120,625 1112,626" fill="none" stroke="#00ff00" stroke-width="1"/>
<rect x="1191.5" y="591.5" width="10" height="42" fill="none" stroke="#ffffff" stroke-width="1"/>
<text x="1192" y="605" fill="#ffffff" font-size="8" font-weight="bold">风</text>
<text x="1192" y="625" fill="#ffffff" font-size="8" font-weight="bold">风</text>
<path d="M1101,541 L1106,533 L1109,536 L1104,545" fill="none" stroke="#00ff00" stroke-width="1"/>
<text x="1072" y="459" fill="#ffffff" font-size="10" font-weight="bold">上</text>
<circle cx="1071" cy="459" r="2" fill="none" stroke="#ffffff" stroke-width="1"/>
<text x="1070" y="421" fill="#ffffff" font-size="6" font-weight="bold">400X400</text>
<line x1="1062" y1="425.5" x2="1120" y2="425.5" stroke="#ff00ff" stroke-width="1"/>
<line x1="1062" y1="430.5" x2="1120" y2="430.5" stroke="#ff00ff" stroke-width="1"/>
<line x1="1062" y1="435.5" x2="1120" y2="435.5" stroke="#ff00ff" stroke-width="1"/>
<line x1="1086.5" y1="420" x2="1086.5" y2="440" stroke="#ff00ff" stroke-width="1"/>
<line x1="1061" y1="432" x2="1068" y2="424" stroke="#ffffff" stroke-width="1"/>
<line x1="1068" y1="424.5" x2="1110" y2="424.5" stroke="#ffffff" stroke-width="1"/>
<rect x="1066" y="407" width="6" height="7" fill="#00ff00"/>
<rect x="1074" y="407" width="6" height="7" fill="#00ff00"/>
<path d="M1063,414 L1069,418 L1075,414" fill="none" stroke="#00ff00" stroke-width="1"/>
<path d="M1100,411 Q1099,400 1090,397" fill="none" stroke="#00ff00" stroke-width="1"/>
<line x1="1237.5" y1="402" x2="1237.5" y2="518" stroke="#00ffff" stroke-width="1"/>
<line x1="1240.5" y1="402" x2="1240.5" y2="518" stroke="#00ffff" stroke-width="1"/>
<line x1="1228" y1="409.5" x2="1306" y2="409.5" stroke="#00ffff" stroke-width="1"/>
<line x1="1228" y1="422.5" x2="1318" y2="422.5" stroke="#00ffff" stroke-width="1"/>
<line x1="1318.5" y1="409" x2="1318.5" y2="422" stroke="#00ffff" stroke-width="1"/>
<line x1="1237" y1="434.5" x2="1397" y2="434.5" stroke="#00ffff" stroke-width="1"/>
<line x1="1397" y1="434" x2="1405" y2="409" stroke="#00ffff" stroke-width="1"/>
<line x1="1237" y1="439.5" x2="1407" y2="439.5" stroke="#00ffff" stroke-width="1"/>
<line x1="1407" y1="439" x2="1415" y2="409" stroke="#00ffff" stroke-width="1"/>
<path d="M1238,417 Q1252,418 1252,426 Q1252,433 1238,434" fill="none" stroke="#00ff00" stroke-width="1"/>
<line x1="1228" y1="518.5" x2="1406" y2="518.5" stroke="#00ffff" stroke-width="1"/>
<line x1="1406.5" y1="518" x2="1406.5" y2="538" stroke="#00ffff" stroke-width="1"/>
<line x1="1228" y1="521.5" x2="1391" y2="521.5" stroke="#00ffff" stroke-width="1"/>
<line x1="1391.5" y1="521" x2="1391.5" y2="538" stroke="#00ffff" stroke-width="1"/>
<line x1="1228" y1="525.5" x2="1311" y2="525.5" stroke="#00ffff" stroke-width="1"/>
<line x1="1311.5" y1="525" x2="1311.5" y2="538" stroke="#00ffff" stroke-width="1"/>
<line x1="1228" y1="530.5" x2="1300" y2="530.5" stroke="#00ffff" stroke-width="1"/>
<line x1="1300.5" y1="530" x2="1300.5" y2="538" stroke="#00ffff" stroke-width="1"/>
<line x1="1228" y1="535.5" x2="1270" y2="535.5" stroke="#00ffff" stroke-width="1"/>
<path d="M1238,519 Q1252,522 1252,530 Q1252,536 1238,539" fill="none" stroke="#00ff00" stroke-width="1"/>
<path d="M1306,408 L1306,405 L1314,405 L1314,408 M1310,405 L1310,402" fill="none" stroke="#00ff00" stroke-width="1"/>
<rect x="1308" y="406" width="4" height="4" fill="#00ff00"/>
<path d="M1316,408 L1316,405 L1324,405 L1324,408 M1320,405 L1320,402" fill="none" stroke="#00ff00" stroke-width="1"/>
<rect x="1318" y="406" width="4" height="4" fill="#00ff00"/>
<path d="M1401,408 L1401,405 L1409,405 L1409,408 M1405,405 L1405,402" fill="none" stroke="#00ff00" stroke-width="1"/>
<rect x="1403" y="406" width="4" height="4" fill="#00ff00"/>
<path d="M1413,408 L1413,405 L1421,405 L1421,408 M1417,405 L1417,402" fill="none" stroke="#00ff00" stroke-width="1"/>
<rect x="1415" y="406" width="4" height="4" fill="#00ff00"/>
<path d="M1266,534 L1266,537 L1274,537 L1274,534 M1270,537 L1270,540" fill="none" stroke="#00ff00" stroke-width="1"/>
<rect x="1268" y="533" width="4" height="4" fill="#00ff00"/>
<path d="M1295,534 L1295,537 L1303,537 L1303,534 M1299,537 L1299,540" fill="none" stroke="#00ff00" stroke-width="1"/>
<rect x="1297" y="533" width="4" height="4" fill="#00ff00"/>
<path d="M1307,534 L1307,537 L1315,537 L1315,534 M1311,537 L1311,540" fill="none" stroke="#00ff00" stroke-width="1"/>
<rect x="1309" y="533" width="4" height="4" fill="#00ff00"/>
<path d="M1387,534 L1387,537 L1395,537 L1395,534 M1391,537 L1391,540" fill="none" stroke="#00ff00" stroke-width="1"/>
<rect x="1389" y="533" width="4" height="4" fill="#00ff00"/>
<path d="M1401,534 L1401,537 L1409,537 L1409,534 M1405,537 L1405,540" fill="none" stroke="#00ff00" stroke-width="1"/>
<rect x="1403" y="533" width="4" height="4" fill="#00ff00"/>
<path d="M1280,556 L1280,553 L1288,553 L1288,556 M1284,553 L1284,550" fill="none" stroke="#00ff00" stroke-width="1"/>
<rect x="1282" y="554" width="4" height="4" fill="#00ff00"/>
<path d="M1292,556 L1292,553 L1300,553 L1300,556 M1296,553 L1296,550" fill="none" stroke="#00ff00" stroke-width="1"/>
<rect x="1294" y="554" width="4" height="4" fill="#00ff00"/>
<path d="M1426,556 L1426,553 L1434,553 L1434,556 M1430,553 L1430,550" fill="none" stroke="#00ff00" stroke-width="1"/>
<rect x="1428" y="554" width="4" height="4" fill="#00ff00"/>
<path d="M1441,556 L1441,553 L1449,553 L1449,556 M1445,553 L1445,550" fill="none" stroke="#00ff00" stroke-width="1"/>
<rect x="1443" y="554" width="4" height="4" fill="#00ff00"/>
<line x1="1238" y1="543.5" x2="1490" y2="543.5" stroke="#00ffff" stroke-width="1"/>
<line x1="1238" y1="545.5" x2="1490" y2="545.5" stroke="#00ffff" stroke-width="1"/>
<line x1="1228" y1="552.5" x2="1281" y2="552.5" stroke="#00ffff" stroke-width="1"/>
<line x1="1228" y1="560.5" x2="1292" y2="560.5" stroke="#00ffff" stroke-width="1"/>
<line x1="1292.5" y1="552" x2="1292.5" y2="560" stroke="#00ffff" stroke-width="1"/>
<line x1="1228" y1="563.5" x2="1425" y2="563.5" stroke="#00ffff" stroke-width="1"/>
<line x1="1425.5" y1="552" x2="1425.5" y2="563" stroke="#00ffff" stroke-width="1"/>
<line x1="1228" y1="567.5" x2="1440" y2="567.5" stroke="#00ffff" stroke-width="1"/>
<line x1="1440.5" y1="552" x2="1440.5" y2="567" stroke="#00ffff" stroke-width="1"/>
<line x1="1236.5" y1="570" x2="1236.5" y2="640" stroke="#00ffff" stroke-width="1"/>
<line x1="1238.5" y1="534" x2="1238.5" y2="560" stroke="#00ffff" stroke-width="1"/>
<path d="M1238,555 Q1253,557 1253,563 Q1252,570 1238,571" fill="none" stroke="#00ff00" stroke-width="1"/>
<path d="M1249,589 L1245,589 L1245,597 L1249,597 M1245,593 L1228,593" fill="none" stroke="#00ff00" stroke-width="1"/>
<path d="M1249,600 L1245,600 L1245,608 L1249,608 M1245,604 L1228,604" fill="none" stroke="#00ff00" stroke-width="1"/>
<path d="M1249,612 L1245,612 L1245,620 L1249,620 M1245,616 L1228,616" fill="none" stroke="#00ff00" stroke-width="1"/>
<line x1="1228" y1="627.5" x2="1287" y2="627.5" stroke="#00ffff" stroke-width="1"/>
<line x1="1287.5" y1="627" x2="1287.5" y2="632" stroke="#00ffff" stroke-width="1"/>
<line x1="1228" y1="633.5" x2="1273" y2="633.5" stroke="#00ffff" stroke-width="1"/>
<path d="M1249,456 L1245,456 L1245,464 L1249,464 M1245,460 L1240,460" fill="none" stroke="#00ff00" stroke-width="1"/>
<path d="M1249,480 L1245,480 L1245,488 L1249,488 M1245,484 L1240,484" fill="none" stroke="#00ff00" stroke-width="1"/>
<text x="1265" y="425" fill="#ffffff" font-size="6" font-weight="bold">P</text>
<text x="1262" y="434" fill="#ffffff" font-size="6" font-weight="bold">D</text>
<text x="1364" y="428" fill="#ffffff" font-size="6" font-weight="bold">B</text>
<text x="1340" y="445" fill="#ffffff" font-size="6" font-weight="bold">P</text>
<text x="1231" y="453" fill="#ffffff" font-size="6" font-weight="bold">D</text>
<text x="1233" y="475" fill="#ffffff" font-size="6" font-weight="bold">P</text>
<text x="1375" y="515" fill="#ffffff" font-size="6" font-weight="bold">B</text>
<text x="1353" y="525" fill="#ffffff" font-size="6" font-weight="bold">D</text>
<text x="1337" y="540" fill="#ffffff" font-size="6" font-weight="bold">F</text>
<text x="1393" y="535" fill="#ffffff" font-size="6" font-weight="bold">P</text>
<text x="1359" y="473" fill="#ffffff" font-size="9" text-anchor="middle" font-weight="bold">写字间</text>
<text x="1359" y="600" fill="#ffffff" font-size="9" text-anchor="middle" font-weight="bold">写字间</text>
<text x="1277" y="745" fill="#ffffff" font-size="9" text-anchor="middle" font-weight="bold">写字间</text>
<line x1="1228" y1="642" x2="1332" y2="658" stroke="#00ffff" stroke-width="1"/>
<line x1="1228" y1="642" x2="1347" y2="666" stroke="#00ffff" stroke-width="1"/>
<line x1="1228" y1="642" x2="1368" y2="672" stroke="#00ffff" stroke-width="1"/>
<line x1="1228" y1="642" x2="1380" y2="687" stroke="#00ffff" stroke-width="1"/>
<line x1="1228" y1="640.5" x2="1330" y2="640.5" stroke="#00ffff" stroke-width="1"/>
<line x1="1228" y1="638.5" x2="1312" y2="638.5" stroke="#00ffff" stroke-width="1"/>
<line x1="1330.5" y1="640" x2="1330.5" y2="672" stroke="#00ffff" stroke-width="1"/>
<line x1="1370.5" y1="666" x2="1370.5" y2="717" stroke="#00ffff" stroke-width="1"/>
<line x1="1228" y1="648" x2="1250" y2="675" stroke="#00ffff" stroke-width="1"/>
<line x1="1228" y1="652" x2="1258" y2="675" stroke="#00ffff" stroke-width="1"/>
<line x1="1228" y1="656" x2="1272" y2="675" stroke="#00ffff" stroke-width="1"/>
<path d="M1246,677 L1246,680 L1254,680 L1254,677 M1250,680 L1250,683" fill="none" stroke="#00ff00" stroke-width="1"/>
<path d="M1256,677 L1256,680 L1264,680 L1264,677 M1260,680 L1260,683" fill="none" stroke="#00ff00" stroke-width="1"/>
<path d="M1268,677 L1268,680 L1276,680 L1276,677 M1272,680 L1272,683" fill="none" stroke="#00ff00" stroke-width="1"/>
<path d="M1296,655 L1296,658 L1304,658 L1304,655 M1300,658 L1300,661" fill="none" stroke="#00ff00" stroke-width="1"/>
<path d="M1308,655 L1308,658 L1316,658 L1316,655 M1312,658 L1312,661" fill="none" stroke="#00ff00" stroke-width="1"/>
<line x1="1228" y1="672.5" x2="1305" y2="672.5" stroke="#00ffff" stroke-width="1"/>
<path d="M1305,672 Q1306,690 1316,688 L1322,688" fill="none" stroke="#00ff00" stroke-width="1"/>
<line x1="1226.5" y1="658" x2="1226.5" y2="845" stroke="#00ffff" stroke-width="1"/>
<line x1="1226" y1="718.5" x2="1358" y2="718.5" stroke="#00ffff" stroke-width="1"/>
<line x1="1222" y1="732.5" x2="1368" y2="732.5" stroke="#00ffff" stroke-width="1"/>
<path d="M1355,707 L1361,713 M1355,713 L1361,707" fill="none" stroke="#00ff00" stroke-width="1"/>
<path d="M1365,721 L1371,727 M1365,727 L1371,721" fill="none" stroke="#00ff00" stroke-width="1"/>
<path d="M1357,699 L1363,705 M1357,705 L1363,699" fill="none" stroke="#00ff00" stroke-width="1"/>
<path d="M1367,714 L1373,720 M1367,720 L1373,714" fill="none" stroke="#00ff00" stroke-width="1"/>
<line x1="1345" y1="690" x2="1403" y2="766" stroke="#00ffff" stroke-width="1"/>
<line x1="1341" y1="690" x2="1400" y2="768" stroke="#00ffff" stroke-width="1"/>
<polyline points="1477,417 1488,560 1499,694 1472,717 1475,727 1436,742 1436,754 1401,766 1403,779 1362,788 1362,800 1323,805 1323,818 1282,822 1282,834 1240,834 1240,845 1199,845 1199,855 926,844 926,826" fill="none" stroke="#ffffff" stroke-width="2"/>
<polyline points="816,822 868,822 868,832 916,832" fill="none" stroke="#ffffff" stroke-width="2"/>
<polyline points="1484.0,398 1498.0,560 1506.0,690" fill="none" stroke="#00ff00" stroke-width="1"/>
<polyline points="1486.2,398 1500.2,560 1508.2,690" fill="none" stroke="#00ff00" stroke-width="1"/>
<polyline points="1488.4,398 1502.4,560 1510.4,690" fill="none" stroke="#00ff00" stroke-width="1"/>
<polyline points="1490.6,398 1504.6,560 1512.6,690" fill="none" stroke="#00ff00" stroke-width="1"/>
<line x1="1519.5" y1="681.5" x2="1476.5" y2="720.5" stroke="#00ff00" stroke-width="1"/>
<line x1="1476.5" y1="720.5" x2="1476.5" y2="730.5" stroke="#00ff00" stroke-width="1"/>
<line x1="1519.5" y1="683.5" x2="1476.5" y2="722.5" stroke="#00ff00" stroke-width="1"/>
<line x1="1476.5" y1="722.5" x2="1476.5" y2="732.5" stroke="#00ff00" stroke-width="1"/>
<line x1="1519.5" y1="685.5" x2="1476.5" y2="724.5" stroke="#00ff00" stroke-width="1"/>
<line x1="1476.5" y1="724.5" x2="1476.5" y2="734.5" stroke="#00ff00" stroke-width="1"/>
<line x1="1519.5" y1="687.5" x2="1476.5" y2="726.5" stroke="#00ff00" stroke-width="1"/>
<line x1="1476.5" y1="726.5" x2="1476.5" y2="736.5" stroke="#00ff00" stroke-width="1"/>
<line x1="1492.5" y1="724.5" x2="1439.5" y2="746.5" stroke="#00ff00" stroke-width="1"/>
<line x1="1439.5" y1="746.5" x2="1439.5" y2="757.5" stroke="#00ff00" stroke-width="1"/>
<line x1="1492.5" y1="726.5" x2="1439.5" y2="748.5" stroke="#00ff00" stroke-width="1"/>
<line x1="1439.5" y1="748.5" x2="1439.5" y2="759.5" stroke="#00ff00" stroke-width="1"/>
<line x1="1492.5" y1="728.5" x2="1439.5" y2="750.5" stroke="#00ff00" stroke-width="1"/>
<line x1="1439.5" y1="750.5" x2="1439.5" y2="761.5" stroke="#00ff00" stroke-width="1"/>
<line x1="1492.5" y1="730.5" x2="1439.5" y2="752.5" stroke="#00ff00" stroke-width="1"/>
<line x1="1439.5" y1="752.5" x2="1439.5" y2="763.5" stroke="#00ff00" stroke-width="1"/>
<line x1="1453.5" y1="752.5" x2="1404.5" y2="769.5" stroke="#00ff00" stroke-width="1"/>
<line x1="1404.5" y1="769.5" x2="1404.5" y2="782.5" stroke="#00ff00" stroke-width="1"/>
<line x1="1453.5" y1="754.5" x2="1404.5" y2="771.5" stroke="#00ff00" stroke-width="1"/>
<line x1="1404.5" y1="771.5" x2="1404.5" y2="784.5" stroke="#00ff00" stroke-width="1"/>
<line x1="1453.5" y1="756.5" x2="1404.5" y2="773.5" stroke="#00ff00" stroke-width="1"/>
<line x1="1404.5" y1="773.5" x2="1404.5" y2="786.5" stroke="#00ff00" stroke-width="1"/>
<line x1="1453.5" y1="758.5" x2="1404.5" y2="775.5" stroke="#00ff00" stroke-width="1"/>
<line x1="1404.5" y1="775.5" x2="1404.5" y2="788.5" stroke="#00ff00" stroke-width="1"/>
<line x1="1421.5" y1="779.5" x2="1365.5" y2="791.5" stroke="#00ff00" stroke-width="1"/>
<line x1="1365.5" y1="791.5" x2="1365.5" y2="803.5" stroke="#00ff00" stroke-width="1"/>
<line x1="1421.5" y1="781.5" x2="1365.5" y2="793.5" stroke="#00ff00" stroke-width="1"/>
<line x1="1365.5" y1="793.5" x2="1365.5" y2="805.5" stroke="#00ff00" stroke-width="1"/>
<line x1="1421.5" y1="783.5" x2="1365.5" y2="795.5" stroke="#00ff00" stroke-width="1"/>
<line x1="1365.5" y1="795.5" x2="1365.5" y2="807.5" stroke="#00ff00" stroke-width="1"/>
<line x1="1421.5" y1="785.5" x2="1365.5" y2="797.5" stroke="#00ff00" stroke-width="1"/>
<line x1="1365.5" y1="797.5" x2="1365.5" y2="809.5" stroke="#00ff00" stroke-width="1"/>
<line x1="1380.5" y1="801.5" x2="1326.5" y2="808.5" stroke="#00ff00" stroke-width="1"/>
<line x1="1326.5" y1="808.5" x2="1326.5" y2="821.5" stroke="#00ff00" stroke-width="1"/>
<line x1="1380.5" y1="803.5" x2="1326.5" y2="810.5" stroke="#00ff00" stroke-width="1"/>
<line x1="1326.5" y1="810.5" x2="1326.5" y2="823.5" stroke="#00ff00" stroke-width="1"/>
<line x1="1380.5" y1="805.5" x2="1326.5" y2="812.5" stroke="#00ff00" stroke-width="1"/>
<line x1="1326.5" y1="812.5" x2="1326.5" y2="825.5" stroke="#00ff00" stroke-width="1"/>
<line x1="1380.5" y1="807.5" x2="1326.5" y2="814.5" stroke="#00ff00" stroke-width="1"/>
<line x1="1326.5" y1="814.5" x2="1326.5" y2="827.5" stroke="#00ff00" stroke-width="1"/>
<line x1="1341.5" y1="819.5" x2="1285.5" y2="825.5" stroke="#00ff00" stroke-width="1"/>
<line x1="1285.5" y1="825.5" x2="1285.5" y2="837.5" stroke="#00ff00" stroke-width="1"/>
<line x1="1341.5" y1="821.5" x2="1285.5" y2="827.5" stroke="#00ff00" stroke-width="1"/>
<line x1="1285.5" y1="827.5" x2="1285.5" y2="839.5" stroke="#00ff00" stroke-width="1"/>
<line x1="1341.5" y1="823.5" x2="1285.5" y2="829.5" stroke="#00ff00" stroke-width="1"/>
<line x1="1285.5" y1="829.5" x2="1285.5" y2="841.5" stroke="#00ff00" stroke-width="1"/>
<line x1="1341.5" y1="825.5" x2="1285.5" y2="831.5" stroke="#00ff00" stroke-width="1"/>
<line x1="1285.5" y1="831.5" x2="1285.5" y2="843.5" stroke="#00ff00" stroke-width="1"/>
<line x1="1300.5" y1="837.5" x2="1244.5" y2="837.5" stroke="#00ff00" stroke-width="1"/>
<line x1="1244.5" y1="837.5" x2="1244.5" y2="848.5" stroke="#00ff00" stroke-width="1"/>
<line x1="1300.5" y1="839.5" x2="1244.5" y2="839.5" stroke="#00ff00" stroke-width="1"/>
<line x1="1244.5" y1="839.5" x2="1244.5" y2="850.5" stroke="#00ff00" stroke-width="1"/>
<line x1="1300.5" y1="841.5" x2="1244.5" y2="841.5" stroke="#00ff00" stroke-width="1"/>
<line x1="1244.5" y1="841.5" x2="1244.5" y2="852.5" stroke="#00ff00" stroke-width="1"/>
<line x1="1300.5" y1="843.5" x2="1244.5" y2="843.5" stroke="#00ff00" stroke-width="1"/>
<line x1="1244.5" y1="843.5" x2="1244.5" y2="854.5" stroke="#00ff00" stroke-width="1"/>
<line x1="1258.5" y1="848.5" x2="1202.5" y2="848.5" stroke="#00ff00" stroke-width="1"/>
<line x1="1258.5" y1="850.5" x2="1202.5" y2="850.5" stroke="#00ff00" stroke-width="1"/>
<line x1="1258.5" y1="852.5" x2="1202.5" y2="852.5" stroke="#00ff00" stroke-width="1"/>
<line x1="1258.5" y1="854.5" x2="1202.5" y2="854.5" stroke="#00ff00" stroke-width="1"/>
<polyline points="797,829.0 862,829.0 862,839.0 922,839.0 922,848.0" fill="none" stroke="#00ff00" stroke-width="1"/>
<polyline points="797,831.2 862,831.2 862,841.2 922,841.2 922,850.2" fill="none" stroke="#00ff00" stroke-width="1"/>
<polyline points="797,833.4 862,833.4 862,843.4 922,843.4 922,852.4" fill="none" stroke="#00ff00" stroke-width="1"/>
<polyline points="797,835.6 862,835.6 862,845.6 922,845.6 922,854.6" fill="none" stroke="#00ff00" stroke-width="1"/>
<line x1="1202.5" y1="858.5" x2="926.5" y2="849.5" stroke="#00ff00" stroke-width="1"/>
<line x1="1202.5" y1="860.5" x2="926.5" y2="851.5" stroke="#00ff00" stroke-width="1"/>
<line x1="1202.5" y1="862.5" x2="926.5" y2="853.5" stroke="#00ff00" stroke-width="1"/>
<line x1="1202.5" y1="864.5" x2="926.5" y2="855.5" stroke="#00ff00" stroke-width="1"/>
<line x1="815" y1="672.5" x2="845" y2="672.5" stroke="#00ffff" stroke-width="1"/>
<line x1="870" y1="672.5" x2="917" y2="672.5" stroke="#00ffff" stroke-width="1"/>
<line x1="935" y1="672.5" x2="940" y2="672.5" stroke="#00ffff" stroke-width="1"/>
<line x1="956" y1="672.5" x2="1033" y2="672.5" stroke="#00ffff" stroke-width="1"/>
<line x1="1072" y1="672.5" x2="1076" y2="672.5" stroke="#00ffff" stroke-width="1"/>
<line x1="1093" y1="672.5" x2="1168" y2="672.5" stroke="#00ffff" stroke-width="1"/>
<line x1="1208" y1="672.5" x2="1208" y2="672.5" stroke="#00ffff" stroke-width="1"/>
<line x1="1230" y1="672.5" x2="1330" y2="672.5" stroke="#00ffff" stroke-width="1"/>
<path d="M845,672 L845,686 Q855,684 858,674 Q861,684 870,686 L870,672" fill="none" stroke="#00ff00" stroke-width="1"/>
<path d="M940,672 L940,688 Q952,686 956,672" fill="none" stroke="#00ff00" stroke-width="1"/>
<path d="M1053,672 L1053,688 Q1036,686 1033,672 M1072,672 L1076,688 Q1090,686 1093,672" fill="none" stroke="#00ff00" stroke-width="1"/>
<path d="M1189,672 L1189,688 Q1172,686 1168,672 M1208,672 L1210,688 Q1226,686 1230,672" fill="none" stroke="#00ff00" stroke-width="1"/>
<line x1="821.5" y1="659" x2="821.5" y2="742" stroke="#00ffff" stroke-width="1"/>
<line x1="805" y1="742.5" x2="821" y2="742.5" stroke="#00ffff" stroke-width="1"/>
<path d="M808,745 L805,745 M799,740 L805,740 L805,750 L799,750" fill="none" stroke="#00ff00" stroke-width="1"/>
<rect x="799" y="743" width="4" height="4" fill="#00ff00"/>
<line x1="826.5" y1="659" x2="826.5" y2="752" stroke="#00ffff" stroke-width="1"/>
<line x1="805" y1="752.5" x2="826" y2="752.5" stroke="#00ffff" stroke-width="1"/>
<path d="M808,755 L805,755 M799,750 L805,750 L805,760 L799,760" fill="none" stroke="#00ff00" stroke-width="1"/>
<rect x="799" y="753" width="4" height="4" fill="#00ff00"/>
<line x1="797.5" y1="691" x2="797.5" y2="807" stroke="#00ffff" stroke-width="1"/>
<line x1="801.5" y1="691" x2="801.5" y2="807" stroke="#00ffff" stroke-width="1"/>
<line x1="889.5" y1="659" x2="889.5" y2="780" stroke="#00ffff" stroke-width="1"/>
<line x1="889" y1="780.5" x2="917" y2="780.5" stroke="#00ffff" stroke-width="1"/>
<path d="M915,783 L918,783 M924,778 L918,778 L918,788 L924,788" fill="none" stroke="#00ff00" stroke-width="1"/>
<rect x="920" y="781" width="4" height="4" fill="#00ff00"/>
<line x1="893.5" y1="659" x2="893.5" y2="767" stroke="#00ffff" stroke-width="1"/>
<line x1="893" y1="767.5" x2="917" y2="767.5" stroke="#00ffff" stroke-width="1"/>
<path d="M915,770 L918,770 M924,765 L918,765 L918,775 L924,775" fill="none" stroke="#00ff00" stroke-width="1"/>
<rect x="920" y="768" width="4" height="4" fill="#00ff00"/>
<line x1="910.5" y1="659" x2="910.5" y2="726" stroke="#00ffff" stroke-width="1"/>
<line x1="910" y1="726.5" x2="917" y2="726.5" stroke="#00ffff" stroke-width="1"/>
<path d="M915,729 L918,729 M924,724 L918,724 L918,734 L924,734" fill="none" stroke="#00ff00" stroke-width="1"/>
<rect x="920" y="727" width="4" height="4" fill="#00ff00"/>
<line x1="913.5" y1="659" x2="913.5" y2="712" stroke="#00ffff" stroke-width="1"/>
<line x1="913" y1="712.5" x2="917" y2="712.5" stroke="#00ffff" stroke-width="1"/>
<path d="M915,716 L918,716 M924,711 L918,711 L918,721 L924,721" fill="none" stroke="#00ff00" stroke-width="1"/>
<rect x="920" y="714" width="4" height="4" fill="#00ff00"/>
<line x1="900.5" y1="659" x2="900.5" y2="672" stroke="#00ffff" stroke-width="1"/>
<path d="M900,672 L900,680 M896,683 L896,680 L904,680 L904,683" fill="none" stroke="#00ff00" stroke-width="1"/>
<rect x="898" y="681" width="4" height="3" fill="#00ff00"/>
<line x1="925.5" y1="691" x2="925.5" y2="807" stroke="#00ffff" stroke-width="1"/>
<line x1="928.5" y1="691" x2="928.5" y2="807" stroke="#00ffff" stroke-width="1"/>
<line x1="943.5" y1="659" x2="943.5" y2="735" stroke="#00ffff" stroke-width="1"/>
<line x1="935" y1="735.5" x2="943" y2="735.5" stroke="#00ffff" stroke-width="1"/>
<path d="M932,739 L935,739 M941,734 L935,734 L935,744 L941,744" fill="none" stroke="#00ff00" stroke-width="1"/>
<rect x="937" y="737" width="4" height="4" fill="#00ff00"/>
<line x1="949.5" y1="659" x2="949.5" y2="759" stroke="#00ffff" stroke-width="1"/>
<line x1="935" y1="759.5" x2="949" y2="759.5" stroke="#00ffff" stroke-width="1"/>
<path d="M932,763 L935,763 M941,758 L935,758 L935,768 L941,768" fill="none" stroke="#00ff00" stroke-width="1"/>
<rect x="937" y="761" width="4" height="4" fill="#00ff00"/>
<path d="M972,672 L972,680 M968,683 L968,680 L976,680 L976,683" fill="none" stroke="#00ff00" stroke-width="1"/>
<rect x="970" y="681" width="4" height="3" fill="#00ff00"/>
<path d="M1007,672 L1007,680 M1003,683 L1003,680 L1011,680 L1011,683" fill="none" stroke="#00ff00" stroke-width="1"/>
<rect x="1005" y="681" width="4" height="3" fill="#00ff00"/>
<path d="M1020,672 L1020,680 M1016,683 L1016,680 L1024,680 L1024,683" fill="none" stroke="#00ff00" stroke-width="1"/>
<rect x="1018" y="681" width="4" height="3" fill="#00ff00"/>
<line x1="1047.5" y1="659" x2="1047.5" y2="734" stroke="#00ffff" stroke-width="1"/>
<line x1="1047" y1="734.5" x2="1062" y2="734.5" stroke="#00ffff" stroke-width="1"/>
<path d="M1065,738 L1062,738 M1056,733 L1062,733 L1062,743 L1056,743" fill="none" stroke="#00ff00" stroke-width="1"/>
<rect x="1056" y="736" width="4" height="4" fill="#00ff00"/>
<line x1="1050.5" y1="659" x2="1050.5" y2="753" stroke="#00ffff" stroke-width="1"/>
<line x1="1050" y1="758.5" x2="1062" y2="758.5" stroke="#00ffff" stroke-width="1"/>
<path d="M1065,762 L1062,762 M1056,757 L1062,757 L1062,767 L1056,767" fill="none" stroke="#00ff00" stroke-width="1"/>
<rect x="1056" y="760" width="4" height="4" fill="#00ff00"/>
<line x1="1062.5" y1="691" x2="1062.5" y2="807" stroke="#00ffff" stroke-width="1"/>
<line x1="1066.5" y1="691" x2="1066.5" y2="848" stroke="#00ffff" stroke-width="1"/>
<line x1="1062.5" y1="827" x2="1062.5" y2="848" stroke="#00ffff" stroke-width="1"/>
<line x1="1078.5" y1="659" x2="1078.5" y2="742" stroke="#00ffff" stroke-width="1"/>
<line x1="1066" y1="742.5" x2="1078" y2="742.5" stroke="#00ffff" stroke-width="1"/>
<path d="M1063,746 L1066,746 M1072,741 L1066,741 L1066,751 L1072,751" fill="none" stroke="#00ff00" stroke-width="1"/>
<rect x="1068" y="744" width="4" height="4" fill="#00ff00"/>
<line x1="1082.5" y1="659" x2="1082.5" y2="759" stroke="#00ffff" stroke-width="1"/>
<line x1="1066" y1="759.5" x2="1082" y2="759.5" stroke="#00ffff" stroke-width="1"/>
<path d="M1063,762 L1066,762 M1072,757 L1066,757 L1066,767 L1072,767" fill="none" stroke="#00ff00" stroke-width="1"/>
<rect x="1068" y="760" width="4" height="4" fill="#00ff00"/>
<path d="M1110,672 L1110,680 M1106,683 L1106,680 L1114,680 L1114,683" fill="none" stroke="#00ff00" stroke-width="1"/>
<rect x="1108" y="681" width="4" height="3" fill="#00ff00"/>
<path d="M1121,672 L1121,680 M1117,683 L1117,680 L1125,680 L1125,683" fill="none" stroke="#00ff00" stroke-width="1"/>
<rect x="1119" y="681" width="4" height="3" fill="#00ff00"/>
<path d="M1153,672 L1153,680 M1149,683 L1149,680 L1157,680 L1157,683" fill="none" stroke="#00ff00" stroke-width="1"/>
<rect x="1151" y="681" width="4" height="3" fill="#00ff00"/>
<line x1="1176.5" y1="659" x2="1176.5" y2="759" stroke="#00ffff" stroke-width="1"/>
<line x1="1176" y1="759.5" x2="1199" y2="759.5" stroke="#00ffff" stroke-width="1"/>
<path d="M1202,763 L1199,763 M1193,758 L1199,758 L1199,768 L1193,768" fill="none" stroke="#00ff00" stroke-width="1"/>
<rect x="1193" y="761" width="4" height="4" fill="#00ff00"/>
<line x1="1183.5" y1="659" x2="1183.5" y2="743" stroke="#00ffff" stroke-width="1"/>
<line x1="1183" y1="743.5" x2="1199" y2="743.5" stroke="#00ffff" stroke-width="1"/>
<path d="M1202,747 L1199,747 M1193,742 L1199,742 L1199,752 L1193,752" fill="none" stroke="#00ff00" stroke-width="1"/>
<rect x="1193" y="745" width="4" height="4" fill="#00ff00"/>
<line x1="1199.5" y1="691" x2="1199.5" y2="807" stroke="#00ffff" stroke-width="1"/>
<line x1="1203.5" y1="691" x2="1203.5" y2="848" stroke="#00ffff" stroke-width="1"/>
<line x1="1199.5" y1="827" x2="1199.5" y2="848" stroke="#00ffff" stroke-width="1"/>
<line x1="1213.5" y1="659" x2="1213.5" y2="736" stroke="#00ffff" stroke-width="1"/>
<line x1="1203" y1="736.5" x2="1213" y2="736.5" stroke="#00ffff" stroke-width="1"/>
<path d="M1200,740 L1203,740 M1209,735 L1203,735 L1203,745 L1209,745" fill="none" stroke="#00ff00" stroke-width="1"/>
<rect x="1205" y="738" width="4" height="4" fill="#00ff00"/>
<line x1="1217.5" y1="659" x2="1217.5" y2="773" stroke="#00ffff" stroke-width="1"/>
<line x1="1203" y1="755.5" x2="1217" y2="755.5" stroke="#00ffff" stroke-width="1"/>
<path d="M1200,758 L1203,758 M1209,753 L1203,753 L1203,763 L1209,763" fill="none" stroke="#00ff00" stroke-width="1"/>
<rect x="1205" y="756" width="4" height="4" fill="#00ff00"/>
<line x1="1221.5" y1="659" x2="1221.5" y2="802" stroke="#00ffff" stroke-width="1"/>
<line x1="1203" y1="782.5" x2="1221" y2="782.5" stroke="#00ffff" stroke-width="1"/>
<path d="M1200,785 L1203,785 M1209,780 L1203,780 L1203,790 L1209,790" fill="none" stroke="#00ff00" stroke-width="1"/>
<rect x="1205" y="783" width="4" height="4" fill="#00ff00"/>
<line x1="1203" y1="800.5" x2="1221" y2="800.5" stroke="#00ffff" stroke-width="1"/>
<path d="M1200,803 L1203,803 M1209,798 L1203,798 L1203,808 L1209,808" fill="none" stroke="#00ff00" stroke-width="1"/>
<rect x="1205" y="801" width="4" height="4" fill="#00ff00"/>
<text x="852" y="713" fill="#ffffff" font-size="9" text-anchor="middle" font-weight="bold">写字间</text>
<text x="991" y="745" fill="#ffffff" font-size="9" text-anchor="middle" font-weight="bold">写字间</text>
<text x="1135" y="745" fill="#ffffff" font-size="9" text-anchor="middle" font-weight="bold">写字间</text>
<text x="818" y="717" fill="#ffffff" font-size="6" font-weight="bold">D</text>
<text x="828" y="716" fill="#ffffff" font-size="6" font-weight="bold">P</text>
<text x="880" y="716" fill="#ffffff" font-size="6" font-weight="bold">P</text>
<text x="908" y="701" fill="#ffffff" font-size="6" font-weight="bold">P</text>
<text x="920" y="718" fill="#ffffff" font-size="6" font-weight="bold">D</text>
<text x="952" y="727" fill="#ffffff" font-size="6" font-weight="bold">D</text>
<text x="958" y="712" fill="#ffffff" font-size="6" font-weight="bold">P</text>
<text x="1042" y="720" fill="#ffffff" font-size="6" font-weight="bold">B</text>
<text x="1053" y="714" fill="#ffffff" font-size="6" font-weight="bold">P</text>
<text x="1075" y="712" fill="#ffffff" font-size="6" font-weight="bold">F</text>
<text x="1085" y="722" fill="#ffffff" font-size="6" font-weight="bold">P</text>
<text x="1166" y="720" fill="#ffffff" font-size="6" font-weight="bold">D</text>
<text x="1183" y="712" fill="#ffffff" font-size="6" font-weight="bold">P</text>
<text x="1210" y="717" fill="#ffffff" font-size="6" font-weight="bold">F</text>
<text x="1212" y="765" fill="#ffffff" font-size="6" font-weight="bold">B</text>
<text x="1221" y="788" fill="#ffffff" font-size="6" font-weight="bold">P</text>
<line x1="755" y1="616.5" x2="791" y2="616.5" stroke="#ffff00" stroke-width="1"/>
<line x1="755" y1="622.5" x2="784" y2="622.5" stroke="#ffff00" stroke-width="1"/>
<line x1="784.5" y1="622" x2="784.5" y2="946" stroke="#ffff00" stroke-width="1"/>
<line x1="791.5" y1="616" x2="791.5" y2="810" stroke="#ffff00" stroke-width="1"/>
<line x1="791.5" y1="825" x2="791.5" y2="946" stroke="#ffff00" stroke-width="1"/>
<line x1="755" y1="733.5" x2="784" y2="733.5" stroke="#00ffff" stroke-width="1"/>
<line x1="755" y1="736.5" x2="784" y2="736.5" stroke="#00ffff" stroke-width="1"/>
<line x1="755" y1="775.5" x2="784" y2="775.5" stroke="#ffff00" stroke-width="1"/>
<line x1="755" y1="782.5" x2="784" y2="782.5" stroke="#ffff00" stroke-width="1"/>
<line x1="764.5" y1="736" x2="764.5" y2="775" stroke="#ffffff" stroke-width="1"/>
<line x1="767.5" y1="736" x2="767.5" y2="775" stroke="#ffffff" stroke-width="1"/>
<path d="M764,745 L757,752 L764,758 L757,764 L764,770" fill="none" stroke="#00ff00" stroke-width="1"/>
<line x1="755" y1="818.5" x2="776" y2="818.5" stroke="#00ffff" stroke-width="1"/>
<line x1="755" y1="821.5" x2="776" y2="821.5" stroke="#00ffff" stroke-width="1"/>
<line x1="772.5" y1="825" x2="772.5" y2="862" stroke="#00ff00" stroke-width="1"/>
<line x1="772" y1="862.5" x2="784" y2="862.5" stroke="#ffffff" stroke-width="1"/>
<line x1="755" y1="984.5" x2="790" y2="984.5" stroke="#00ffff" stroke-width="1"/>
<line x1="755" y1="988.5" x2="790" y2="988.5" stroke="#00ffff" stroke-width="1"/>
<line x1="790.5" y1="962" x2="790.5" y2="988" stroke="#00ffff" stroke-width="1"/>
<line x1="786.5" y1="962" x2="786.5" y2="984" stroke="#00ffff" stroke-width="1"/></svg></div>
<div id="sidebar" class="a"></div>
<div id="sbhead" class="a"></div>
<div class="a" style="left:16px;top:204.0px;width:37px;height:37px;border:1px solid #a9a9a9;border-radius:4px;background:linear-gradient(#f8f8f8 0%,#f0f0f0 45%,#e6e6e6 55%,#ececec 100%)"></div>
<svg class="ico" style="left:19.5px;top:207.5px" width="30" height="30" viewBox="0 0 30 30"><path d="M7,23 Q2,23 2,18 Q2,13 8,13 Q9,7 15,7 Q21,7 22,13 Q28,13 28,18 Q28,23 23,23Z" fill="#e6e6e6" stroke="#333" stroke-width="1.3"/><path d="M14,10 L17,14" stroke="#2a7ad0" stroke-width="1.5"/></svg>
<div class="lbl" style="left:17px;top:249.0px;width:37px;text-align:center;font-size:18px">云盘</div>
<div class="a" style="left:16px;top:285.6px;width:37px;height:37px;border:1px solid #a9a9a9;border-radius:4px;background:linear-gradient(#f8f8f8 0%,#f0f0f0 45%,#e6e6e6 55%,#ececec 100%)"></div>
<svg class="ico" style="left:19.5px;top:289.1px" width="30" height="30" viewBox="0 0 30 30"><path d="M4,6 L11,6 L12,8 L26,8 L26,25 L4,25Z" fill="#f4f4f4" stroke="#333" stroke-width="1.3"/><circle cx="11" cy="13" r="1.6" fill="none" stroke="#2a7ad0"/><path d="M6,22 L11,16 L16,20 L21,15 L25,21" fill="none" stroke="#2a7ad0" stroke-width="1.2"/></svg>
<div class="lbl" style="left:17px;top:330.6px;width:37px;text-align:center;font-size:18px">图库</div>
<div class="a" style="left:16px;top:367.2px;width:37px;height:37px;border:1px solid #a9a9a9;border-radius:4px;background:linear-gradient(#f8f8f8 0%,#f0f0f0 45%,#e6e6e6 55%,#ececec 100%)"></div>
<svg class="ico" style="left:19.5px;top:370.7px" width="30" height="30" viewBox="0 0 30 30"><rect x="6" y="6" width="18" height="18" fill="#ddd"/><path d="M3,6 L27,6 M3,24 L27,24 M6,3 L6,27 M24,3 L24,27" stroke="#333" stroke-width="1.2"/><path d="M7,10 L20,23 M7,15 L15,23 M11,7 L24,20" stroke="#666" stroke-width="1.5"/><path d="M13,26 Q18,18 26,14" stroke="#2a7ad0" stroke-width="1.3" fill="none"/></svg>
<div class="lbl" style="left:17px;top:412.2px;width:37px;text-align:center;font-size:18px">填充</div>
<div class="a" style="left:16px;top:448.8px;width:37px;height:37px;border:1px solid #a9a9a9;border-radius:4px;background:linear-gradient(#f8f8f8 0%,#f0f0f0 45%,#e6e6e6 55%,#ececec 100%)"></div>
<svg class="ico" style="left:19.5px;top:452.3px" width="30" height="30" viewBox="0 0 30 30"><path d="M7,12 Q9,5 16,5 Q21,5 24,9 M24,5 L24,10 L19,10" stroke="#444" stroke-width="1.3" fill="none"/><path d="M23,18 Q21,25 14,25 Q9,25 6,21 M6,25 L6,20 L11,20" stroke="#2a7ad0" stroke-width="1.5" fill="none"/></svg>
<div class="lbl" style="left:17px;top:493.8px;width:37px;text-align:center;font-size:18px">转换</div>
<div class="a" style="left:16px;top:530.4px;width:37px;height:37px;border:1px solid #a9a9a9;border-radius:4px;background:linear-gradient(#f8f8f8 0%,#f0f0f0 45%,#e6e6e6 55%,#ececec 100%)"></div>
<svg class="ico" style="left:19.5px;top:533.9px" width="30" height="30" viewBox="0 0 30 30"><path d="M4,22 L6,16 L19,3 Q22,2 23,4 Q25,6 23,8 L10,21Z M6,16 L10,21" stroke="#444" stroke-width="1.3" fill="none"/><path d="M15,18 L21,13 L27,18 L27,27 L24,27 L24,21 L18,21 L18,27 L15,27Z" fill="#2a7ad0"/></svg>
<div class="lbl" style="left:17px;top:575.4px;width:37px;text-align:center;font-size:18px">家装</div>
<div class="a" style="left:16px;top:612.0px;width:37px;height:37px;border:1px solid #a9a9a9;border-radius:4px;background:linear-gradient(#f8f8f8 0%,#f0f0f0 45%,#e6e6e6 55%,#ececec 100%)"></div>
<svg class="ico" style="left:19.5px;top:615.5px" width="30" height="30" viewBox="0 0 30 30"><path d="M4,22 L6,16 L19,3 Q22,2 23,4 Q25,6 23,8 L10,21Z M6,16 L10,21" stroke="#444" stroke-width="1.3" fill="none"/><circle cx="21" cy="21" r="5.5" fill="none" stroke="#2a7ad0" stroke-width="1.3" stroke-dasharray="2.5,1"/><path d="M21,17 L21,25" stroke="#2a7ad0" stroke-width="1.4"/></svg>
<div class="lbl" style="left:17px;top:657.0px;width:37px;text-align:center;font-size:18px">弱电</div>
<div class="a" style="left:16px;top:693.6px;width:37px;height:37px;border:1px solid #a9a9a9;border-radius:4px;background:linear-gradient(#f8f8f8 0%,#f0f0f0 45%,#e6e6e6 55%,#ececec 100%)"></div>
<svg class="ico" style="left:19.5px;top:697.1px" width="30" height="30" viewBox="0 0 30 30"><path d="M4,22 L6,16 L19,3 Q22,2 23,4 Q25,6 23,8 L10,21Z M6,16 L10,21" stroke="#444" stroke-width="1.3" fill="none"/><path d="M21,14 L26,22 L16,22Z M21,18 L26,25 L16,25Z" fill="#2a7ad0"/><rect x="20.5" y="24" width="1.5" height="3" fill="#2a7ad0"/></svg>
<div class="lbl" style="left:17px;top:738.6px;width:37px;text-align:center;font-size:18px">园林</div>
<div class="a" style="left:16px;top:775.2px;width:37px;height:37px;border:1px solid #a9a9a9;border-radius:4px;background:linear-gradient(#f8f8f8 0%,#f0f0f0 45%,#e6e6e6 55%,#ececec 100%)"></div>
<svg class="ico" style="left:19.5px;top:778.7px" width="30" height="30" viewBox="0 0 30 30"><path d="M5,5 L13,25 L17,25 L25,5 L21,5 L15,21 L9,5Z" fill="#e8f0f8" stroke="#2a7ad0" stroke-width="1.4"/></svg>
<div class="lbl" style="left:17px;top:820.2px;width:37px;text-align:center;font-size:18px">工具</div>
<div class="a" style="left:16px;top:856.8px;width:37px;height:37px;border:1px solid #a9a9a9;border-radius:4px;background:linear-gradient(#f8f8f8 0%,#f0f0f0 45%,#e6e6e6 55%,#ececec 100%)"></div>
<svg class="ico" style="left:19.5px;top:860.3px" width="30" height="30" viewBox="0 0 30 30"><rect x="4" y="8" width="22" height="15" fill="#f2f2f2" stroke="#333" stroke-width="1.4"/><path d="M4,9 L15,16 L26,9" stroke="#2a7ad0" stroke-width="1.4" fill="none"/></svg>
<div class="lbl" style="left:17px;top:901.8px;width:37px;text-align:center;font-size:18px">反馈</div>
<div id="tabbar" class="a"></div>
<div id="status" class="a"></div>
<svg class="a" style="left:73px;top:1155px" width="460" height="30">
 <defs><linearGradient id="navg" x1="0" y1="0" x2="0" y2="1"><stop offset="0" stop-color="#fbfbfb"/><stop offset="1" stop-color="#f0f0f0"/></linearGradient></defs>
 <rect x="1" y="2" width="107" height="27" fill="#8a8a8a"/>
 <rect x="3" y="4" width="21" height="23" fill="url(#navg)"/>
 <rect x="29.5" y="4" width="23" height="23" fill="url(#navg)"/>
 <rect x="56.5" y="4" width="23" height="23" fill="url(#navg)"/>
 <rect x="83.5" y="4" width="23" height="23" fill="url(#navg)"/>
 <g fill="#8a8a8a">
  <rect x="7" y="7" width="2" height="17"/><path d="M11,15.5 L18,7 L18,24Z"/>
  <path d="M38,15.5 L46,7 L46,24Z"/>
  <path d="M62,7 L70,15.5 L62,24Z"/>
  <path d="M89,7 L97,15.5 L89,24Z"/><rect x="100" y="7" width="2" height="17"/>
 </g>
 <path d="M108,2 L219,2 L204,28 L119,28 Z" fill="#fff" stroke="#7a7a7a" stroke-width="1"/>
 <path d="M221,2 L330,2 L317,28 L231,28 Z" fill="#b3b3b3" stroke="#7e7e7e" stroke-width="1"/>
 <path d="M333,2 L443,2 L429,28 L343,28 Z" fill="#b3b3b3" stroke="#7e7e7e" stroke-width="1"/>
 <rect x="108" y="28" width="352" height="1" fill="#9aa0a8"/>
</svg>
<div class="t" style="left:216px;top:1161px;font-size:18px;color:#111">模型</div>
<div class="t" style="left:314px;top:1161px;font-size:18px;color:#111">Layout1</div>
<div class="t" style="left:426px;top:1161px;font-size:18px;color:#111">Layout2</div>
<!-- status -->
<svg class="a" style="left:12px;top:1187px" width="31" height="30">
 <rect x="0.5" y="0.5" width="30" height="29" rx="4" fill="#d8232a"/>
 <path d="M0.5,4 Q0.5,0.5 4,0.5 L27,0.5 Q30.5,0.5 30.5,4 L30.5,8 L8,18 Z" fill="#f7c600"/>
 <path d="M30.5,8 L30.5,26 Q30.5,29.5 27,29.5 L18,29.5 L6,24 Z" fill="#8ab81a"/>
 <path d="M5,26 L24,5 L27,8 L8,27 Z" fill="#e8b070" stroke="#b06a20" stroke-width="1"/>
 <path d="M2,3 L9,18 L5,26" stroke="#fff" stroke-width="2.5" fill="none"/>
</svg>
<div class="t" style="left:59px;top:1193px;font-size:17px;color:#6a6a6a">CAD迷你画图</div>
<div class="a" style="left:202px;top:1187px;width:144px;height:34px;border:1px solid #9a9a9a;background:linear-gradient(#f4f4f4,#e4e4e4 55%,#cfcfcf);box-shadow:inset 0 0 0 1px #fff"></div>
<svg class="a" style="left:210px;top:1193px" width="20" height="22"><path d="M13,2 L5,13 L10,13 L6,21 L15,9 L10,9 Z" fill="none" stroke="#555" stroke-width="1.4"/></svg>
<div class="t" style="left:234px;top:1192px;font-size:19.8px;color:#555">快捷命令表</div>
<div class="a" style="left:363px;top:1190px;width:426px;height:30px;border:1px solid #7a7a7a;background:#efefef"></div>
<div class="t" style="left:365px;top:1190px;font-size:13px;color:#777">输入快捷命令</div>
<div class="a" style="left:788px;top:1190px;width:124px;height:30px;border:2px solid #777;background:#d5d5d5"></div>
<div class="t" style="left:833px;top:1196px;font-size:18px;color:#111">确定</div>
<div class="a" style="left:1644px;top:1190px;width:197px;height:30px;border:1px solid #8a8a8a;background:#efefef"></div>
<div class="t" style="left:1644px;top:1189px;font-size:13px;color:#888">查找文字</div>
<div class="a" style="left:1841px;top:1190px;width:46px;height:30px;border:1px solid #8a8a8a;background:linear-gradient(#f0f0f0,#d6d6d6)"></div>
<svg class="a" style="left:1850px;top:1193px" width="28" height="24"><circle cx="11" cy="10" r="7" fill="none" stroke="#333" stroke-width="1.6"/><path d="M16,15 L22,21" stroke="#333" stroke-width="2"/></svg>
<div class="a" style="left:1897px;top:1186px;width:37px;height:37px;border:1px solid #e0a040;border-radius:2px;background:linear-gradient(#fde6b6,#fbd28a 50%,#f8bc50)"></div>
<svg class="a" style="left:1897px;top:1186px" width="37" height="37"><text x="14" y="16" font-size="13" font-weight="bold" fill="#5a6a80" font-family="Liberation Sans">N</text><path d="M3,27 L11,27 M7,23 L7,31" stroke="#222" stroke-width="2"/><path d="M13,27 L25,27" stroke="#555" stroke-width="1.3" stroke-dasharray="2,2"/><path d="M27,23 L33,31 M33,23 L27,31" stroke="#222" stroke-width="2.4"/></svg>
<svg class="a" style="left:1944px;top:1188px" width="34" height="34"><path d="M2,3 L2,29 L33,29" stroke="#333" stroke-width="2.6" fill="none"/><path d="M2,15 L14,15 L14,29" stroke="#333" stroke-width="1.6" fill="none"/></svg>
<div class="a" style="left:1988px;top:1186px;width:37px;height:37px;border:1px solid #e0a040;border-radius:2px;background:linear-gradient(#fde6b6,#fbd28a 50%,#f8bc50)"></div>
<svg class="a" style="left:1988px;top:1186px" width="37" height="37"><rect x="8" y="6" width="22" height="20" fill="none" stroke="#333" stroke-width="2"/><path d="M13,22 L13,11 L23,22Z" fill="none" stroke="#555" stroke-width="1.3"/><path d="M4,30 L33,30" stroke="#333" stroke-width="2"/></svg>
<div class="a" style="left:2034px;top:1186px;width:37px;height:37px;border:1px solid #e0a040;border-radius:2px;background:linear-gradient(#fde6b6,#fbd28a 50%,#f8bc50)"></div>
<svg class="a" style="left:2034px;top:1186px" width="37" height="37"><path d="M18.5,6 L18.5,31 M6,18 L31,18" stroke="#222" stroke-width="3"/></svg>
<div class="a" style="left:2084px;top:1190px;width:28px;height:28px;border-radius:50%;background:conic-gradient(#d02828,#6040c0 25%,#3060d0 35%,#30a060 55%,#e0d020 75%,#e07020 88%,#d02828);border:2px solid #777"></div>
<svg class="a" style="left:2128px;top:1190px" width="32" height="28"><circle cx="15" cy="15" r="8" fill="none" stroke="#444" stroke-width="2"/><ellipse cx="15" cy="15" rx="14" ry="5" transform="rotate(-30 15 15)" fill="none" stroke="#444" stroke-width="1.8"/><circle cx="26" cy="6" r="3" fill="#fff" stroke="#444" stroke-width="1.5"/></svg>

<div id="botline" class="a"></div>
<div id="lborder" class="a"></div>
<div class="a" style="left:2173px;top:51px;width:1px;height:1174px;background:#8a8a8a"></div>
<div class="a" style="left:2174px;top:51px;width:2px;height:1176px;background:#f4f4f4"></div>

</body></html>
